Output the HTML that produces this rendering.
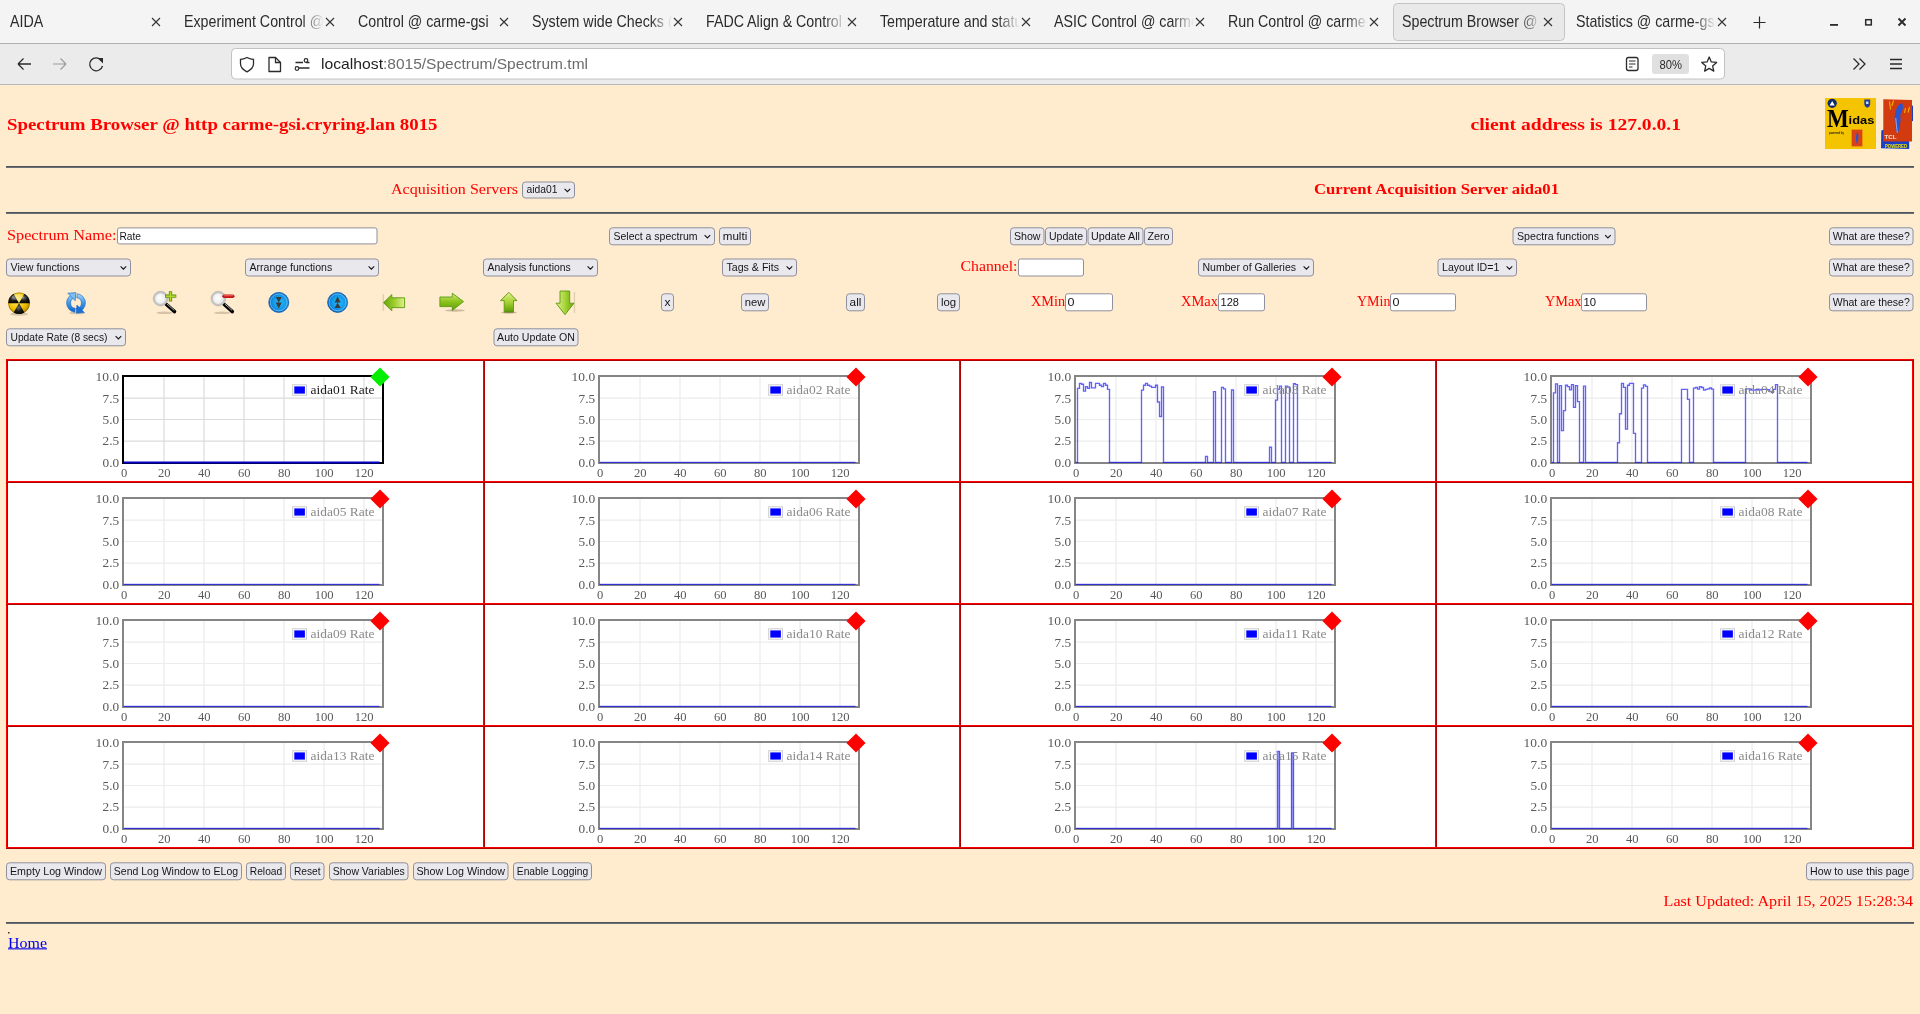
<!DOCTYPE html>
<html><head><meta charset="utf-8"><title>Spectrum Browser</title>
<style>
html,body{margin:0;padding:0;width:1920px;height:1014px;overflow:hidden;background:#ffebcd;font-family:"Liberation Sans",sans-serif;}
svg{position:absolute;left:0;top:0;display:block;will-change:transform}
</style></head>
<body>
<svg width="1920" height="1014" viewBox="0 0 1920 1014">
<rect x="0" y="0" width="1920" height="43" fill="#f4f4f4"/>
<rect x="0" y="43" width="1920" height="1" fill="#b0b0b0"/>
<rect x="0" y="44" width="1920" height="40" fill="#ebebeb"/>
<rect x="0" y="84" width="1920" height="1" fill="#b8b8b8"/>
<rect x="1393.5" y="3.5" width="171" height="37" rx="4" fill="#e9e9e9" stroke="#c4c4c4" stroke-width="1"/>
<defs><linearGradient id="fadeT" x1="0" x2="1"><stop offset="0" stop-color="#f4f4f4" stop-opacity="0"/><stop offset="1" stop-color="#f4f4f4"/></linearGradient><linearGradient id="fadeA" x1="0" x2="1"><stop offset="0" stop-color="#e9e9e9" stop-opacity="0"/><stop offset="1" stop-color="#e9e9e9"/></linearGradient></defs>
<defs><clipPath id="tc0"><rect x="8" y="0" width="142" height="43"/></clipPath><clipPath id="tc1"><rect x="182" y="0" width="142" height="43"/></clipPath><clipPath id="tc2"><rect x="356" y="0" width="142" height="43"/></clipPath><clipPath id="tc3"><rect x="530" y="0" width="142" height="43"/></clipPath><clipPath id="tc4"><rect x="704" y="0" width="142" height="43"/></clipPath><clipPath id="tc5"><rect x="878" y="0" width="142" height="43"/></clipPath><clipPath id="tc6"><rect x="1052" y="0" width="142" height="43"/></clipPath><clipPath id="tc7"><rect x="1226" y="0" width="142" height="43"/></clipPath><clipPath id="tc8"><rect x="1400" y="0" width="142" height="43"/></clipPath><clipPath id="tc9"><rect x="1574" y="0" width="142" height="43"/></clipPath></defs>
<g clip-path="url(#tc0)">
<text transform="translate(10,27) scale(0.89,1)" x="0" y="0" font-family='"Liberation Sans", sans-serif' font-size="16" fill="#2b2b2b">AIDA</text>
</g>
<path d="M152 18L160 26M160 18L152 26" stroke="#333" stroke-width="1.1" fill="none"/>
<g clip-path="url(#tc1)">
<text transform="translate(184,27) scale(0.89,1)" x="0" y="0" font-family='"Liberation Sans", sans-serif' font-size="16" fill="#2b2b2b">Experiment Control @ carme-gsi</text>
</g>
<rect x="302" y="8" width="22" height="28" fill="url(#fadeT)"/>
<path d="M326 18L334 26M334 18L326 26" stroke="#333" stroke-width="1.1" fill="none"/>
<g clip-path="url(#tc2)">
<text transform="translate(358,27) scale(0.89,1)" x="0" y="0" font-family='"Liberation Sans", sans-serif' font-size="16" fill="#2b2b2b">Control @ carme-gsi</text>
</g>
<path d="M500 18L508 26M508 18L500 26" stroke="#333" stroke-width="1.1" fill="none"/>
<g clip-path="url(#tc3)">
<text transform="translate(532,27) scale(0.89,1)" x="0" y="0" font-family='"Liberation Sans", sans-serif' font-size="16" fill="#2b2b2b">System wide Checks (carme)</text>
</g>
<rect x="650" y="8" width="22" height="28" fill="url(#fadeT)"/>
<path d="M674 18L682 26M682 18L674 26" stroke="#333" stroke-width="1.1" fill="none"/>
<g clip-path="url(#tc4)">
<text transform="translate(706,27) scale(0.89,1)" x="0" y="0" font-family='"Liberation Sans", sans-serif' font-size="16" fill="#2b2b2b">FADC Align &amp; Control @ carme</text>
</g>
<rect x="824" y="8" width="22" height="28" fill="url(#fadeT)"/>
<path d="M848 18L856 26M856 18L848 26" stroke="#333" stroke-width="1.1" fill="none"/>
<g clip-path="url(#tc5)">
<text transform="translate(880,27) scale(0.89,1)" x="0" y="0" font-family='"Liberation Sans", sans-serif' font-size="16" fill="#2b2b2b">Temperature and status @ carme</text>
</g>
<rect x="998" y="8" width="22" height="28" fill="url(#fadeT)"/>
<path d="M1022 18L1030 26M1030 18L1022 26" stroke="#333" stroke-width="1.1" fill="none"/>
<g clip-path="url(#tc6)">
<text transform="translate(1054,27) scale(0.89,1)" x="0" y="0" font-family='"Liberation Sans", sans-serif' font-size="16" fill="#2b2b2b">ASIC Control @ carme-gsi</text>
</g>
<rect x="1172" y="8" width="22" height="28" fill="url(#fadeT)"/>
<path d="M1196 18L1204 26M1204 18L1196 26" stroke="#333" stroke-width="1.1" fill="none"/>
<g clip-path="url(#tc7)">
<text transform="translate(1228,27) scale(0.89,1)" x="0" y="0" font-family='"Liberation Sans", sans-serif' font-size="16" fill="#2b2b2b">Run Control @ carme-gsi</text>
</g>
<rect x="1346" y="8" width="22" height="28" fill="url(#fadeT)"/>
<path d="M1370 18L1378 26M1378 18L1370 26" stroke="#333" stroke-width="1.1" fill="none"/>
<g clip-path="url(#tc8)">
<text transform="translate(1402,27) scale(0.89,1)" x="0" y="0" font-family='"Liberation Sans", sans-serif' font-size="16" fill="#2b2b2b">Spectrum Browser @ carme-gsi</text>
</g>
<rect x="1520" y="8" width="22" height="28" fill="url(#fadeA)"/>
<path d="M1544 18L1552 26M1552 18L1544 26" stroke="#333" stroke-width="1.1" fill="none"/>
<g clip-path="url(#tc9)">
<text transform="translate(1576,27) scale(0.89,1)" x="0" y="0" font-family='"Liberation Sans", sans-serif' font-size="16" fill="#2b2b2b">Statistics @ carme-gsi</text>
</g>
<rect x="1694" y="8" width="22" height="28" fill="url(#fadeT)"/>
<path d="M1718 18L1726 26M1726 18L1718 26" stroke="#333" stroke-width="1.1" fill="none"/>
<path d="M1753.5 22.5H1765.5M1759.5 16.5V28.5" stroke="#2b2b2b" stroke-width="1.2"/>
<rect x="1830" y="24" width="8" height="1.8" fill="#2b2b2b"/>
<rect x="1865.7" y="19.7" width="5.6" height="5.2" fill="none" stroke="#2b2b2b" stroke-width="1.5"/>
<path d="M1898.5 18.5L1905.5 25.5M1905.5 18.5L1898.5 25.5" stroke="#2b2b2b" stroke-width="1.9"/>
<path d="M18 64H31M18 64L23.5 58.5M18 64L23.5 69.5" stroke="#2b2b2b" stroke-width="1.3" fill="none"/>
<path d="M53 64H66M66 64L60.5 58.5M66 64L60.5 69.5" stroke="#9a9a9a" stroke-width="1.1" fill="none"/>
<path d="M101.5 60.5A6.5 6.5 0 1 0 102.5 66" stroke="#2b2b2b" stroke-width="1.3" fill="none"/><path d="M97.5 58L103 58L103 63.5Z" fill="#2b2b2b"/>
<rect x="231.5" y="48.5" width="1493" height="30.5" rx="4" fill="#ffffff" stroke="#c2c2c2" stroke-width="1"/>
<path d="M247 57.5C244.5 58.8 242.5 59.3 240.5 59.3V64C240.5 67.5 243.5 70 247 71.8C250.5 70 253.5 67.5 253.5 64V59.3C251.5 59.3 249.5 58.8 247 57.5Z" stroke="#2b2b2b" stroke-width="1.3" fill="none"/>
<path d="M269 57.5H275.5L280.5 62.5V71.5H269Z" stroke="#2b2b2b" stroke-width="1.3" fill="none" stroke-linejoin="round"/><path d="M275.5 57.5V62.5H280.5" stroke="#2b2b2b" stroke-width="1.3" fill="none"/>
<path d="M295.5 62.5H303M306 62.5H309.5M299 68H309.5" stroke="#2b2b2b" stroke-width="1.3"/><circle cx="306" cy="60.5" r="1.8" fill="none" stroke="#2b2b2b" stroke-width="1.2"/><circle cx="297" cy="68.5" r="1.8" fill="none" stroke="#2b2b2b" stroke-width="1.2"/>
<text x="321" y="68.6" font-family='"Liberation Sans", sans-serif' font-size="15" font-weight="400" fill="#1f1f1f" text-anchor="start" textLength="62" lengthAdjust="spacingAndGlyphs" >localhost</text>
<text x="383" y="68.6" font-family='"Liberation Sans", sans-serif' font-size="15" font-weight="400" fill="#6b6b6b" text-anchor="start" textLength="205" lengthAdjust="spacingAndGlyphs" >:8015/Spectrum/Spectrum.tml</text>
<rect x="1626.5" y="57.5" width="11.5" height="13" rx="2" fill="none" stroke="#2b2b2b" stroke-width="1.3"/><path d="M1629 61H1635.5M1629 64H1635.5M1629 67H1632.5" stroke="#2b2b2b" stroke-width="1.1"/>
<rect x="1652" y="54" width="37" height="20" rx="3" fill="#e0e0e0"/>
<text x="1659.5" y="69" font-family='"Liberation Sans", sans-serif' font-size="12.5" font-weight="400" fill="#2b2b2b" text-anchor="start" textLength="22.5" lengthAdjust="spacingAndGlyphs" >80%</text>
<polygon points="1709.20,57.00 1711.32,61.89 1716.62,62.39 1712.62,65.91 1713.78,71.11 1709.20,68.40 1704.62,71.11 1705.78,65.91 1701.78,62.39 1707.08,61.89" fill="none" stroke="#2b2b2b" stroke-width="1.3" stroke-linejoin="round"/>
<path d="M1853.5 58.5L1859 64L1853.5 69.5M1859.5 58.5L1865 64L1859.5 69.5" stroke="#2b2b2b" stroke-width="1.3" fill="none"/>
<path d="M1890 59.5H1902M1890 64H1902M1890 68.5H1902" stroke="#2b2b2b" stroke-width="1.3"/>
<rect x="0" y="85" width="1920" height="929" fill="#ffebcd"/>
<text x="7" y="130" font-family='"Liberation Serif", serif' font-size="16.5" font-weight="700" fill="#ff0000" text-anchor="start" textLength="430.5" lengthAdjust="spacingAndGlyphs" >Spectrum Browser @ http carme-gsi.cryring.lan 8015</text>
<text x="1470.5" y="130" font-family='"Liberation Serif", serif' font-size="16.5" font-weight="700" fill="#ff0000" text-anchor="start" textLength="210.5" lengthAdjust="spacingAndGlyphs" >client address is 127.0.0.1</text>
<rect x="6" y="166" width="1908" height="1" fill="#4f5257"/><rect x="6" y="167" width="1908" height="1" fill="#6c7075"/>
<rect x="6" y="212" width="1908" height="1" fill="#4f5257"/><rect x="6" y="213" width="1908" height="1" fill="#6c7075"/>
<rect x="6" y="922" width="1908" height="1" fill="#4f5257"/><rect x="6" y="923" width="1908" height="1" fill="#6c7075"/>
<text x="391" y="193.5" font-family='"Liberation Serif", serif' font-size="15" font-weight="400" fill="#ff0000" text-anchor="start" textLength="127" lengthAdjust="spacingAndGlyphs" >Acquisition Servers</text>
<text x="1314" y="193.5" font-family='"Liberation Serif", serif' font-size="14.8" font-weight="700" fill="#ff0000" text-anchor="start" textLength="245" lengthAdjust="spacingAndGlyphs" >Current Acquisition Server aida01</text>
<text x="7" y="240" font-family='"Liberation Serif", serif' font-size="14.8" font-weight="400" fill="#ff0000" text-anchor="start" textLength="109.5" lengthAdjust="spacingAndGlyphs" >Spectrum Name:</text>
<text x="960.5" y="271" font-family='"Liberation Serif", serif' font-size="14.8" font-weight="400" fill="#ff0000" text-anchor="start" textLength="57" lengthAdjust="spacingAndGlyphs" >Channel:</text>
<text x="1031" y="306" font-family='"Liberation Serif", serif' font-size="14.8" font-weight="400" fill="#ff0000" text-anchor="start" textLength="34" lengthAdjust="spacingAndGlyphs" >XMin</text>
<text x="1181" y="306" font-family='"Liberation Serif", serif' font-size="14.8" font-weight="400" fill="#ff0000" text-anchor="start" textLength="37" lengthAdjust="spacingAndGlyphs" >XMax</text>
<text x="1357" y="306" font-family='"Liberation Serif", serif' font-size="14.8" font-weight="400" fill="#ff0000" text-anchor="start" textLength="33.5" lengthAdjust="spacingAndGlyphs" >YMin</text>
<text x="1545" y="306" font-family='"Liberation Serif", serif' font-size="14.8" font-weight="400" fill="#ff0000" text-anchor="start" textLength="36.5" lengthAdjust="spacingAndGlyphs" >YMax</text>
<text x="1663.6" y="906.1" font-family='"Liberation Serif", serif' font-size="14.8" font-weight="400" fill="#ff0000" text-anchor="start" textLength="249.5" lengthAdjust="spacingAndGlyphs" >Last Updated: April 15, 2025 15:28:34</text>
<text x="8" y="948" font-family='"Liberation Serif", serif' font-size="14.8" font-weight="400" fill="#0000ee" text-anchor="start" textLength="39" lengthAdjust="spacingAndGlyphs" >Home</text>
<rect x="8" y="948.3" width="39" height="1.1" fill="#0000ee"/>
<rect x="8" y="932" width="1.5" height="1.5" fill="#333"/>
<rect x="522.5" y="182.0" width="52" height="16" rx="3" fill="#e9e9ed" stroke="#8f8f9d" stroke-width="1"/>
<text x="526.5" y="193.1" font-family='"Liberation Sans", sans-serif' font-size="11.8" font-weight="400" fill="#15141a" text-anchor="start" textLength="31" lengthAdjust="spacingAndGlyphs" >aida01</text>
<path d="M564.6 188.9L567.4 191.70000000000002L570.1999999999999 188.9" stroke="#15141a" stroke-width="1.1" fill="none"/>
<rect x="117.5" y="227.9" width="259.5" height="16" rx="2" fill="#ffffff" stroke="#8f8f9d" stroke-width="1"/>
<text x="119.5" y="240.4" font-family='"Liberation Sans", sans-serif' font-size="11.8" font-weight="400" fill="#15141a" text-anchor="start" textLength="21.5" lengthAdjust="spacingAndGlyphs" >Rate</text>
<rect x="609.5" y="227.8" width="105" height="17" rx="3" fill="#e9e9ed" stroke="#8f8f9d" stroke-width="1"/>
<text x="613.5" y="240.3" font-family='"Liberation Sans", sans-serif' font-size="11.8" font-weight="400" fill="#15141a" text-anchor="start" textLength="84" lengthAdjust="spacingAndGlyphs" >Select a spectrum</text>
<path d="M704.6 235.20000000000002L707.4 238.00000000000003L710.1999999999999 235.20000000000002" stroke="#15141a" stroke-width="1.1" fill="none"/>
<rect x="719.5" y="227.8" width="31" height="17" rx="3" fill="#e9e9ed" stroke="#8f8f9d" stroke-width="1"/>
<text x="735.0" y="240.3" font-family='"Liberation Sans", sans-serif' font-size="11.8" font-weight="400" fill="#15141a" text-anchor="middle" textLength="24.5" lengthAdjust="spacingAndGlyphs" >multi</text>
<rect x="1010.5" y="227.8" width="33.5" height="17" rx="3" fill="#e9e9ed" stroke="#8f8f9d" stroke-width="1"/>
<text x="1027.25" y="240.3" font-family='"Liberation Sans", sans-serif' font-size="11.8" font-weight="400" fill="#15141a" text-anchor="middle" textLength="26.6" lengthAdjust="spacingAndGlyphs" >Show</text>
<rect x="1045.5" y="227.8" width="41" height="17" rx="3" fill="#e9e9ed" stroke="#8f8f9d" stroke-width="1"/>
<text x="1066.0" y="240.3" font-family='"Liberation Sans", sans-serif' font-size="11.8" font-weight="400" fill="#15141a" text-anchor="middle" textLength="34" lengthAdjust="spacingAndGlyphs" >Update</text>
<rect x="1088.0" y="227.8" width="55.0" height="17" rx="3" fill="#e9e9ed" stroke="#8f8f9d" stroke-width="1"/>
<text x="1115.5" y="240.3" font-family='"Liberation Sans", sans-serif' font-size="11.8" font-weight="400" fill="#15141a" text-anchor="middle" textLength="49" lengthAdjust="spacingAndGlyphs" >Update All</text>
<rect x="1144.5" y="227.8" width="28" height="17" rx="3" fill="#e9e9ed" stroke="#8f8f9d" stroke-width="1"/>
<text x="1158.5" y="240.3" font-family='"Liberation Sans", sans-serif' font-size="11.8" font-weight="400" fill="#15141a" text-anchor="middle" textLength="22.2" lengthAdjust="spacingAndGlyphs" >Zero</text>
<rect x="1513.0" y="227.8" width="102.0" height="17" rx="3" fill="#e9e9ed" stroke="#8f8f9d" stroke-width="1"/>
<text x="1517.0" y="240.3" font-family='"Liberation Sans", sans-serif' font-size="11.8" font-weight="400" fill="#15141a" text-anchor="start" textLength="82" lengthAdjust="spacingAndGlyphs" >Spectra functions</text>
<path d="M1605.1000000000001 235.20000000000002L1607.9 238.00000000000003L1610.7 235.20000000000002" stroke="#15141a" stroke-width="1.1" fill="none"/>
<rect x="1829.5" y="227.8" width="83.5" height="17" rx="3" fill="#e9e9ed" stroke="#8f8f9d" stroke-width="1"/>
<text x="1871.25" y="240.3" font-family='"Liberation Sans", sans-serif' font-size="11.8" font-weight="400" fill="#15141a" text-anchor="middle" textLength="77" lengthAdjust="spacingAndGlyphs" >What are these?</text>
<rect x="6.5" y="259.0" width="124" height="17" rx="3" fill="#e9e9ed" stroke="#8f8f9d" stroke-width="1"/>
<text x="10.5" y="270.7" font-family='"Liberation Sans", sans-serif' font-size="11.8" font-weight="400" fill="#15141a" text-anchor="start" textLength="69" lengthAdjust="spacingAndGlyphs" >View functions</text>
<path d="M120.60000000000001 266.40000000000003L123.4 269.2L126.2 266.40000000000003" stroke="#15141a" stroke-width="1.1" fill="none"/>
<rect x="245.5" y="259.0" width="133" height="17" rx="3" fill="#e9e9ed" stroke="#8f8f9d" stroke-width="1"/>
<text x="249.5" y="270.7" font-family='"Liberation Sans", sans-serif' font-size="11.8" font-weight="400" fill="#15141a" text-anchor="start" textLength="82.7" lengthAdjust="spacingAndGlyphs" >Arrange functions</text>
<path d="M368.59999999999997 266.40000000000003L371.4 269.2L374.2 266.40000000000003" stroke="#15141a" stroke-width="1.1" fill="none"/>
<rect x="483.5" y="259.0" width="114" height="17" rx="3" fill="#e9e9ed" stroke="#8f8f9d" stroke-width="1"/>
<text x="487.5" y="270.7" font-family='"Liberation Sans", sans-serif' font-size="11.8" font-weight="400" fill="#15141a" text-anchor="start" textLength="83.2" lengthAdjust="spacingAndGlyphs" >Analysis functions</text>
<path d="M587.6 266.40000000000003L590.4 269.2L593.1999999999999 266.40000000000003" stroke="#15141a" stroke-width="1.1" fill="none"/>
<rect x="722.5" y="259.0" width="74" height="17" rx="3" fill="#e9e9ed" stroke="#8f8f9d" stroke-width="1"/>
<text x="726.5" y="270.7" font-family='"Liberation Sans", sans-serif' font-size="11.8" font-weight="400" fill="#15141a" text-anchor="start" textLength="52.5" lengthAdjust="spacingAndGlyphs" >Tags &amp; Fits</text>
<path d="M786.6 266.40000000000003L789.4 269.2L792.1999999999999 266.40000000000003" stroke="#15141a" stroke-width="1.1" fill="none"/>
<rect x="1018.5" y="259.0" width="65" height="17" rx="2" fill="#ffffff" stroke="#8f8f9d" stroke-width="1"/>
<rect x="1198.5" y="259.0" width="115" height="17" rx="3" fill="#e9e9ed" stroke="#8f8f9d" stroke-width="1"/>
<text x="1202.5" y="270.7" font-family='"Liberation Sans", sans-serif' font-size="11.8" font-weight="400" fill="#15141a" text-anchor="start" textLength="93.5" lengthAdjust="spacingAndGlyphs" >Number of Galleries</text>
<path d="M1303.6000000000001 266.40000000000003L1306.4 269.2L1309.2 266.40000000000003" stroke="#15141a" stroke-width="1.1" fill="none"/>
<rect x="1438.0" y="259.0" width="78.5" height="17" rx="3" fill="#e9e9ed" stroke="#8f8f9d" stroke-width="1"/>
<text x="1442.0" y="270.7" font-family='"Liberation Sans", sans-serif' font-size="11.8" font-weight="400" fill="#15141a" text-anchor="start" textLength="57.3" lengthAdjust="spacingAndGlyphs" >Layout ID=1</text>
<path d="M1506.6000000000001 266.40000000000003L1509.4 269.2L1512.2 266.40000000000003" stroke="#15141a" stroke-width="1.1" fill="none"/>
<rect x="1829.5" y="259.0" width="83.5" height="17" rx="3" fill="#e9e9ed" stroke="#8f8f9d" stroke-width="1"/>
<text x="1871.25" y="270.7" font-family='"Liberation Sans", sans-serif' font-size="11.8" font-weight="400" fill="#15141a" text-anchor="middle" textLength="77" lengthAdjust="spacingAndGlyphs" >What are these?</text>
<rect x="661.5" y="293.8" width="12" height="17" rx="3" fill="#e9e9ed" stroke="#8f8f9d" stroke-width="1"/>
<text x="667.5" y="306.3" font-family='"Liberation Sans", sans-serif' font-size="11.8" font-weight="400" fill="#15141a" text-anchor="middle" textLength="6" lengthAdjust="spacingAndGlyphs" >x</text>
<rect x="741.5" y="293.8" width="27" height="17" rx="3" fill="#e9e9ed" stroke="#8f8f9d" stroke-width="1"/>
<text x="755.0" y="306.3" font-family='"Liberation Sans", sans-serif' font-size="11.8" font-weight="400" fill="#15141a" text-anchor="middle" textLength="20.6" lengthAdjust="spacingAndGlyphs" >new</text>
<rect x="846.5" y="293.8" width="18" height="17" rx="3" fill="#e9e9ed" stroke="#8f8f9d" stroke-width="1"/>
<text x="855.5" y="306.3" font-family='"Liberation Sans", sans-serif' font-size="11.8" font-weight="400" fill="#15141a" text-anchor="middle" textLength="11.8" lengthAdjust="spacingAndGlyphs" >all</text>
<rect x="937.5" y="293.8" width="22" height="17" rx="3" fill="#e9e9ed" stroke="#8f8f9d" stroke-width="1"/>
<text x="948.5" y="306.3" font-family='"Liberation Sans", sans-serif' font-size="11.8" font-weight="400" fill="#15141a" text-anchor="middle" textLength="15.2" lengthAdjust="spacingAndGlyphs" >log</text>
<rect x="1065.5" y="293.8" width="47" height="17" rx="2" fill="#ffffff" stroke="#8f8f9d" stroke-width="1"/>
<text x="1067.5" y="306.3" font-family='"Liberation Sans", sans-serif' font-size="11.8" font-weight="400" fill="#15141a" text-anchor="start" textLength="7" lengthAdjust="spacingAndGlyphs" >0</text>
<rect x="1218.5" y="293.8" width="46" height="17" rx="2" fill="#ffffff" stroke="#8f8f9d" stroke-width="1"/>
<text x="1220.5" y="306.3" font-family='"Liberation Sans", sans-serif' font-size="11.8" font-weight="400" fill="#15141a" text-anchor="start" textLength="18.5" lengthAdjust="spacingAndGlyphs" >128</text>
<rect x="1390.5" y="293.8" width="65" height="17" rx="2" fill="#ffffff" stroke="#8f8f9d" stroke-width="1"/>
<text x="1392.5" y="306.3" font-family='"Liberation Sans", sans-serif' font-size="11.8" font-weight="400" fill="#15141a" text-anchor="start" textLength="7" lengthAdjust="spacingAndGlyphs" >0</text>
<rect x="1581.5" y="293.8" width="65" height="17" rx="2" fill="#ffffff" stroke="#8f8f9d" stroke-width="1"/>
<text x="1583.5" y="306.3" font-family='"Liberation Sans", sans-serif' font-size="11.8" font-weight="400" fill="#15141a" text-anchor="start" textLength="12.6" lengthAdjust="spacingAndGlyphs" >10</text>
<rect x="1829.5" y="293.8" width="83.5" height="17" rx="3" fill="#e9e9ed" stroke="#8f8f9d" stroke-width="1"/>
<text x="1871.25" y="306.3" font-family='"Liberation Sans", sans-serif' font-size="11.8" font-weight="400" fill="#15141a" text-anchor="middle" textLength="77" lengthAdjust="spacingAndGlyphs" >What are these?</text>
<rect x="6.5" y="328.8" width="119" height="17" rx="3" fill="#e9e9ed" stroke="#8f8f9d" stroke-width="1"/>
<text x="10.5" y="341.3" font-family='"Liberation Sans", sans-serif' font-size="11.8" font-weight="400" fill="#15141a" text-anchor="start" textLength="97" lengthAdjust="spacingAndGlyphs" >Update Rate (8 secs)</text>
<path d="M115.60000000000001 336.20000000000005L118.4 339.0L121.2 336.20000000000005" stroke="#15141a" stroke-width="1.1" fill="none"/>
<rect x="494.0" y="328.8" width="84.0" height="17" rx="3" fill="#e9e9ed" stroke="#8f8f9d" stroke-width="1"/>
<text x="536.0" y="341.3" font-family='"Liberation Sans", sans-serif' font-size="11.8" font-weight="400" fill="#15141a" text-anchor="middle" textLength="77.8" lengthAdjust="spacingAndGlyphs" >Auto Update ON</text>
<rect x="6.5" y="862.8" width="99" height="17" rx="3" fill="#e9e9ed" stroke="#8f8f9d" stroke-width="1"/>
<text x="56.0" y="875.3" font-family='"Liberation Sans", sans-serif' font-size="11.8" font-weight="400" fill="#15141a" text-anchor="middle" textLength="92" lengthAdjust="spacingAndGlyphs" >Empty Log Window</text>
<rect x="110.5" y="862.8" width="131" height="17" rx="3" fill="#e9e9ed" stroke="#8f8f9d" stroke-width="1"/>
<text x="176.0" y="875.3" font-family='"Liberation Sans", sans-serif' font-size="11.8" font-weight="400" fill="#15141a" text-anchor="middle" textLength="124.3" lengthAdjust="spacingAndGlyphs" >Send Log Window to ELog</text>
<rect x="246.5" y="862.8" width="39" height="17" rx="3" fill="#e9e9ed" stroke="#8f8f9d" stroke-width="1"/>
<text x="266.0" y="875.3" font-family='"Liberation Sans", sans-serif' font-size="11.8" font-weight="400" fill="#15141a" text-anchor="middle" textLength="32.5" lengthAdjust="spacingAndGlyphs" >Reload</text>
<rect x="290.5" y="862.8" width="33.5" height="17" rx="3" fill="#e9e9ed" stroke="#8f8f9d" stroke-width="1"/>
<text x="307.25" y="875.3" font-family='"Liberation Sans", sans-serif' font-size="11.8" font-weight="400" fill="#15141a" text-anchor="middle" textLength="26.7" lengthAdjust="spacingAndGlyphs" >Reset</text>
<rect x="329.5" y="862.8" width="78.5" height="17" rx="3" fill="#e9e9ed" stroke="#8f8f9d" stroke-width="1"/>
<text x="368.75" y="875.3" font-family='"Liberation Sans", sans-serif' font-size="11.8" font-weight="400" fill="#15141a" text-anchor="middle" textLength="72" lengthAdjust="spacingAndGlyphs" >Show Variables</text>
<rect x="413.5" y="862.8" width="94.5" height="17" rx="3" fill="#e9e9ed" stroke="#8f8f9d" stroke-width="1"/>
<text x="460.75" y="875.3" font-family='"Liberation Sans", sans-serif' font-size="11.8" font-weight="400" fill="#15141a" text-anchor="middle" textLength="88.6" lengthAdjust="spacingAndGlyphs" >Show Log Window</text>
<rect x="513.5" y="862.8" width="78" height="17" rx="3" fill="#e9e9ed" stroke="#8f8f9d" stroke-width="1"/>
<text x="552.5" y="875.3" font-family='"Liberation Sans", sans-serif' font-size="11.8" font-weight="400" fill="#15141a" text-anchor="middle" textLength="71.4" lengthAdjust="spacingAndGlyphs" >Enable Logging</text>
<rect x="1806.5" y="862.8" width="106.5" height="17" rx="3" fill="#e9e9ed" stroke="#8f8f9d" stroke-width="1"/>
<text x="1859.75" y="875.3" font-family='"Liberation Sans", sans-serif' font-size="11.8" font-weight="400" fill="#15141a" text-anchor="middle" textLength="99.3" lengthAdjust="spacingAndGlyphs" >How to use this page</text>
<defs>
<radialGradient id="radY" cx="0.4" cy="0.35" r="0.7"><stop offset="0" stop-color="#fff07a"/><stop offset="0.6" stop-color="#f2c200"/><stop offset="1" stop-color="#b88a00"/></radialGradient>
<radialGradient id="radK" cx="0.45" cy="0.4" r="0.7"><stop offset="0" stop-color="#6a6a6a"/><stop offset="0.5" stop-color="#1a1a1a"/><stop offset="1" stop-color="#000"/></radialGradient>
<radialGradient id="blueC" cx="0.55" cy="0.5" r="0.55"><stop offset="0" stop-color="#2ab8f8"/><stop offset="0.6" stop-color="#129ae8"/><stop offset="1" stop-color="#0a62c4"/></radialGradient>
<linearGradient id="grnH" x1="0" y1="0" x2="0" y2="1"><stop offset="0" stop-color="#d4ea7a"/><stop offset="0.5" stop-color="#8cc21a"/><stop offset="1" stop-color="#5f9e06"/></linearGradient>
<linearGradient id="grnV" x1="0" y1="0" x2="1" y2="0"><stop offset="0" stop-color="#e0f08e"/><stop offset="0.5" stop-color="#a8d43a"/><stop offset="1" stop-color="#66a808"/></linearGradient>
<linearGradient id="grnL" x1="0" y1="0" x2="1" y2="0"><stop offset="0" stop-color="#62a40a"/><stop offset="0.5" stop-color="#9ccc2a"/><stop offset="1" stop-color="#e2f08c"/></linearGradient>
<linearGradient id="grnU" x1="0" y1="0" x2="0" y2="1"><stop offset="0" stop-color="#e0f08e"/><stop offset="0.5" stop-color="#a6d232"/><stop offset="1" stop-color="#5c9c06"/></linearGradient>
<linearGradient id="refr" x1="0" y1="0" x2="0" y2="1"><stop offset="0" stop-color="#a9d8fa"/><stop offset="0.5" stop-color="#3c9ae8"/><stop offset="1" stop-color="#0f62c8"/></linearGradient>
<radialGradient id="lens" cx="0.45" cy="0.45" r="0.6"><stop offset="0" stop-color="#ffffff"/><stop offset="0.7" stop-color="#ececec"/><stop offset="1" stop-color="#bdbdbd"/></radialGradient>
</defs>
<ellipse cx="19" cy="314.2" rx="9" ry="1.6" fill="#8a7a60" opacity="0.35"/>
<circle cx="19" cy="303.2" r="10.8" fill="url(#radY)"/>
<path d="M19 303.2L29.80 303.20A10.8 10.8 0 0 0 24.40 293.85Z" fill="url(#radK)"/>
<path d="M19 303.2L13.60 293.85A10.8 10.8 0 0 0 8.20 303.20Z" fill="url(#radK)"/>
<path d="M19 303.2L13.60 312.55A10.8 10.8 0 0 0 24.40 312.55Z" fill="url(#radK)"/>
<circle cx="19" cy="303.2" r="10.4" fill="none" stroke="#000" stroke-opacity="0.35" stroke-width="0.8"/>
<ellipse cx="18" cy="297.2" rx="6" ry="3" fill="#fff" opacity="0.25"/>
<ellipse cx="77" cy="313" rx="8" ry="1.3" fill="#6a5a40" opacity="0.25"/>
<path d="M74.69 293.69A9.4 9.4 0 0 0 74.85 312.33L75.34 308.36A5.4 5.4 0 0 1 75.25 297.65Z" fill="url(#refr)" stroke="#1a64c4" stroke-width="0.6"/>
<path d="M67.8 293.2L75.8 292.6L75.2 300.8Z" fill="#7cc0f4" stroke="#1a64c4" stroke-width="0.6" stroke-linejoin="round"/>
<path d="M77.31 293.69A9.4 9.4 0 0 1 77.15 312.33L76.66 308.36A5.4 5.4 0 0 0 76.75 297.65Z" fill="url(#refr)" stroke="#1a64c4" stroke-width="0.6"/>
<path d="M84.4 312.6L76.4 313.2L76.9 305Z" fill="#1a6fd8" stroke="#1a64c4" stroke-width="0.6" stroke-linejoin="round"/>
<ellipse cx="164.6" cy="312.8" rx="8.5" ry="1.3" fill="#6a5a40" opacity="0.28"/>
<path d="M166.2 304.20000000000005L174.6 311.6" stroke="#000" stroke-width="3.4" stroke-linecap="round"/>
<path d="M167.0 304.0L174.4 310.5" stroke="#fff" stroke-width="0.9" opacity="0.75"/>
<circle cx="160.6" cy="298.6" r="6.4" fill="url(#lens)" stroke="#c4c4c4" stroke-width="1.9"/>
<circle cx="160.6" cy="298.6" r="7.4" fill="none" stroke="#a8a8a8" stroke-width="0.5"/>
<path d="M170.5 291.20000000000005V301.50000000000006M165.0 296.20000000000005H176.3" stroke="#5c9410" stroke-width="3.3"/>
<path d="M170.5 292.00000000000006V300.70000000000005M165.8 296.20000000000005H175.5" stroke="#b4d82c" stroke-width="1.5"/>
<ellipse cx="222.4" cy="312.8" rx="8.5" ry="1.3" fill="#6a5a40" opacity="0.28"/>
<path d="M224.0 304.20000000000005L232.4 311.6" stroke="#000" stroke-width="3.4" stroke-linecap="round"/>
<path d="M224.8 304.0L232.20000000000002 310.5" stroke="#fff" stroke-width="0.9" opacity="0.75"/>
<circle cx="218.4" cy="298.6" r="6.4" fill="url(#lens)" stroke="#c4c4c4" stroke-width="1.9"/>
<circle cx="218.4" cy="298.6" r="7.4" fill="none" stroke="#a8a8a8" stroke-width="0.5"/>
<path d="M224.0 296.20000000000005H232.8" stroke="#c01818" stroke-width="3.4" stroke-linecap="round"/>
<path d="M224.0 295.6H232.8" stroke="#ee5050" stroke-width="1.2" stroke-linecap="round"/>
<circle cx="278.75" cy="302.4" r="10" fill="url(#blueC)" stroke="#0b5aa8" stroke-width="0.8"/>
<circle cx="278.75" cy="302.4" r="8.4" fill="none" stroke="#9fdcff" stroke-width="0.7" opacity="0.8"/>
<path d="M275.75 296.9H281.75L278.75 302.4Z M275.75 302.4H281.75L278.75 308.4Z" fill="#3a3a3a"/>
<circle cx="337.6" cy="302.4" r="10" fill="url(#blueC)" stroke="#0b5aa8" stroke-width="0.8"/>
<circle cx="337.6" cy="302.4" r="8.4" fill="none" stroke="#9fdcff" stroke-width="0.7" opacity="0.8"/>
<path d="M334.6 307.9H340.6L337.6 302.4Z M334.6 302.4H340.6L337.6 296.4Z" fill="#3a3a3a"/>
<rect x="382.6" y="294" width="1.3" height="17" fill="#6a5a40" opacity="0.2"/><rect x="573.8" y="292" width="1.3" height="21" fill="#6a5a40" opacity="0.2"/>
<path d="M383.5 302.7L391.8 294.6V297.8H404.6V307.6H391.8V310.8Z" fill="url(#grnL)" stroke="#5a9a10" stroke-width="0.9" stroke-linejoin="round"/>
<path d="M463.5 301.6L452.3 293.2V297H439.9V306.6H452.3V310.4Z" fill="url(#grnH)" stroke="#5a9a10" stroke-width="0.9" stroke-linejoin="round"/>
<ellipse cx="455" cy="310.5" rx="10" ry="1.2" fill="#6a5a40" opacity="0.35"/>
<path d="M508.8 292.3L500.5 300.6H504.2V312.2H513.5V300.6H517Z" fill="url(#grnU)" stroke="#5a9a10" stroke-width="0.9" stroke-linejoin="round"/>
<ellipse cx="509" cy="312.5" rx="8" ry="1.2" fill="#6a5a40" opacity="0.35"/>
<path d="M565 314.7L556 303.2H560V291H569.7V303.2H574Z" fill="url(#grnV)" stroke="#5a9a10" stroke-width="0.9" stroke-linejoin="round"/>
<rect x="1825" y="98" width="51" height="51" fill="#f5c400"/>
<circle cx="1832.2" cy="103.3" r="4.6" fill="#0d2a6a"/><path d="M1829.6 105.5L1832.2 101L1834.8 105.5Z" fill="#fff"/>
<path d="M1864.3 99.5H1870.2V104C1870.2 106 1868.6 107.2 1867.25 107.8C1865.9 107.2 1864.3 106 1864.3 104Z" fill="#1f3f9a"/><path d="M1866 101.5H1868.5V104H1866Z" fill="#c9d6ff"/>
<text x="1827" y="126.8" font-family='"Liberation Serif", serif' font-size="25.5" font-weight="700" fill="#000" text-anchor="start" textLength="21.8" lengthAdjust="spacingAndGlyphs" >M</text>
<text x="1848.6" y="124.2" font-family='"Liberation Sans", sans-serif' font-size="11.2" font-weight="700" fill="#000" text-anchor="start" textLength="25.8" lengthAdjust="spacingAndGlyphs" >idas</text>
<text x="1829" y="134" font-family='"Liberation Sans", sans-serif' font-size="3.2" font-weight="700" fill="#222" text-anchor="start" textLength="15" lengthAdjust="spacingAndGlyphs" >powered by</text>
<rect x="1851.5" y="129.5" width="11" height="17" fill="#d8421a" stroke="#f0a000" stroke-width="0.6"/><path d="M1857.5 132C1855.5 135 1855.5 141 1857 144C1858.5 140 1859 135 1857.5 132Z" fill="#2a55c8"/>
<path d="M1881.3 130.5L1884 129.5V141H1909.2V149L1881 148.2Z" fill="#1a3fc4"/><path d="M1911 106L1913 105.5V121L1911 121.5Z" fill="#1a3fc4"/>
<path d="M1883.3 99.2L1912 100V141.5H1883.3Z" fill="#d23a10"/>
<path d="M1889.5 101.5L1890.5 109.5M1893.5 100.5L1891.8 106M1909.5 107L1908 112.5M1905.5 108L1904.5 112.8" stroke="#f0b000" stroke-width="1.1"/>
<path d="M1902 103C1896 105 1893.8 115 1895 123C1895.8 129 1897 134 1897.5 135.5C1898.8 130 1901.5 122 1900.3 114.5C1902.5 112 1904 106 1902 103Z" fill="#2a55d0"/><path d="M1895.8 118C1896 124 1897 129 1897.4 133" stroke="#dfe6ff" stroke-width="0.6" fill="none"/>
<text x="1884.5" y="138.8" font-family='"Liberation Sans", sans-serif' font-size="5.5" font-weight="700" fill="#f6e6d8" text-anchor="start" textLength="12" lengthAdjust="spacingAndGlyphs" >TCL</text>
<text x="1885" y="148" font-family='"Liberation Sans", sans-serif' font-size="5" font-weight="700" fill="#f0e000" text-anchor="start" textLength="22" lengthAdjust="spacingAndGlyphs" >POWERED</text>
<rect x="7" y="360" width="1906" height="488" fill="#ffffff"/>
<path d="M164 377V462M204 377V462M244 377V462M284 377V462M324 377V462M364 377V462M123.5 398.20H382M123.5 419.50H382M123.5 441.20H382" stroke="#dcdcdc" stroke-width="1.2" fill="none"/>
<text x="119.2" y="380.90" font-family='"Liberation Serif", serif' font-size="12.2" font-weight="400" fill="#5a5a5a" text-anchor="end" textLength="23.6" lengthAdjust="spacingAndGlyphs" >10.0</text>
<text x="119.2" y="402.60" font-family='"Liberation Serif", serif' font-size="12.2" font-weight="400" fill="#5a5a5a" text-anchor="end" textLength="16.6" lengthAdjust="spacingAndGlyphs" >7.5</text>
<text x="119.2" y="423.70" font-family='"Liberation Serif", serif' font-size="12.2" font-weight="400" fill="#5a5a5a" text-anchor="end" textLength="16.6" lengthAdjust="spacingAndGlyphs" >5.0</text>
<text x="119.2" y="444.70" font-family='"Liberation Serif", serif' font-size="12.2" font-weight="400" fill="#5a5a5a" text-anchor="end" textLength="16.6" lengthAdjust="spacingAndGlyphs" >2.5</text>
<text x="119.2" y="466.60" font-family='"Liberation Serif", serif' font-size="12.2" font-weight="400" fill="#5a5a5a" text-anchor="end" textLength="16.6" lengthAdjust="spacingAndGlyphs" >0.0</text>
<text x="124.2" y="476.7" font-family='"Liberation Serif", serif' font-size="12.2" font-weight="400" fill="#5a5a5a" text-anchor="middle" textLength="6.3" lengthAdjust="spacingAndGlyphs" >0</text>
<text x="164.2" y="476.7" font-family='"Liberation Serif", serif' font-size="12.2" font-weight="400" fill="#5a5a5a" text-anchor="middle" textLength="12.6" lengthAdjust="spacingAndGlyphs" >20</text>
<text x="204.2" y="476.7" font-family='"Liberation Serif", serif' font-size="12.2" font-weight="400" fill="#5a5a5a" text-anchor="middle" textLength="12.6" lengthAdjust="spacingAndGlyphs" >40</text>
<text x="244.2" y="476.7" font-family='"Liberation Serif", serif' font-size="12.2" font-weight="400" fill="#5a5a5a" text-anchor="middle" textLength="12.6" lengthAdjust="spacingAndGlyphs" >60</text>
<text x="284.2" y="476.7" font-family='"Liberation Serif", serif' font-size="12.2" font-weight="400" fill="#5a5a5a" text-anchor="middle" textLength="12.6" lengthAdjust="spacingAndGlyphs" >80</text>
<text x="324.2" y="476.7" font-family='"Liberation Serif", serif' font-size="12.2" font-weight="400" fill="#5a5a5a" text-anchor="middle" textLength="19" lengthAdjust="spacingAndGlyphs" >100</text>
<text x="364.2" y="476.7" font-family='"Liberation Serif", serif' font-size="12.2" font-weight="400" fill="#5a5a5a" text-anchor="middle" textLength="19" lengthAdjust="spacingAndGlyphs" >120</text>
<rect x="123" y="376" width="260" height="87" fill="none" stroke="#000000" stroke-width="2"/>
<path d="M123.5 462.4V462.40H125.5V462.40H127.5V462.40H129.5V462.40H131.5V462.40H133.5V462.40H135.5V462.40H137.5V462.40H139.5V462.40H141.5V462.40H143.5V462.40H145.5V462.40H147.5V462.40H149.5V462.40H151.5V462.40H153.5V462.40H155.5V462.40H157.5V462.40H159.5V462.40H161.5V462.40H163.5V462.40H165.5V462.40H167.5V462.40H169.5V462.40H171.5V462.40H173.5V462.40H175.5V462.40H177.5V462.40H179.5V462.40H181.5V462.40H183.5V462.40H185.5V462.40H187.5V462.40H189.5V462.40H191.5V462.40H193.5V462.40H195.5V462.40H197.5V462.40H199.5V462.40H201.5V462.40H203.5V462.40H205.5V462.40H207.5V462.40H209.5V462.40H211.5V462.40H213.5V462.40H215.5V462.40H217.5V462.40H219.5V462.40H221.5V462.40H223.5V462.40H225.5V462.40H227.5V462.40H229.5V462.40H231.5V462.40H233.5V462.40H235.5V462.40H237.5V462.40H239.5V462.40H241.5V462.40H243.5V462.40H245.5V462.40H247.5V462.40H249.5V462.40H251.5V462.40H253.5V462.40H255.5V462.40H257.5V462.40H259.5V462.40H261.5V462.40H263.5V462.40H265.5V462.40H267.5V462.40H269.5V462.40H271.5V462.40H273.5V462.40H275.5V462.40H277.5V462.40H279.5V462.40H281.5V462.40H283.5V462.40H285.5V462.40H287.5V462.40H289.5V462.40H291.5V462.40H293.5V462.40H295.5V462.40H297.5V462.40H299.5V462.40H301.5V462.40H303.5V462.40H305.5V462.40H307.5V462.40H309.5V462.40H311.5V462.40H313.5V462.40H315.5V462.40H317.5V462.40H319.5V462.40H321.5V462.40H323.5V462.40H325.5V462.40H327.5V462.40H329.5V462.40H331.5V462.40H333.5V462.40H335.5V462.40H337.5V462.40H339.5V462.40H341.5V462.40H343.5V462.40H345.5V462.40H347.5V462.40H349.5V462.40H351.5V462.40H353.5V462.40H355.5V462.40H357.5V462.40H359.5V462.40H361.5V462.40H363.5V462.40H365.5V462.40H367.5V462.40H369.5V462.40H371.5V462.40H373.5V462.40H375.5V462.40H377.5V462.40H379.5V462.4" stroke="#0000c8" stroke-width="2" fill="none"/>
<rect x="292.7" y="384.8" width="13.8" height="10.4" fill="#fff" stroke="#cccccc" stroke-width="1"/>
<rect x="294.3" y="386.4" width="10.6" height="7.2" fill="#0000ff"/>
<text x="310.5" y="394.2" font-family='"Liberation Serif", serif' font-size="13" font-weight="400" fill="#1a1a1a" text-anchor="start" textLength="64" lengthAdjust="spacingAndGlyphs" >aida01 Rate</text>
<path d="M380 367.4L389.6 377L380 386.6L370.4 377Z" fill="#00ee00"/>
<path d="M640 377V462M680 377V462M720 377V462M760 377V462M800 377V462M840 377V462M599.5 398.20H858M599.5 419.50H858M599.5 441.20H858" stroke="#ececec" stroke-width="1.2" fill="none"/>
<text x="595.2" y="380.90" font-family='"Liberation Serif", serif' font-size="12.2" font-weight="400" fill="#5a5a5a" text-anchor="end" textLength="23.6" lengthAdjust="spacingAndGlyphs" >10.0</text>
<text x="595.2" y="402.60" font-family='"Liberation Serif", serif' font-size="12.2" font-weight="400" fill="#5a5a5a" text-anchor="end" textLength="16.6" lengthAdjust="spacingAndGlyphs" >7.5</text>
<text x="595.2" y="423.70" font-family='"Liberation Serif", serif' font-size="12.2" font-weight="400" fill="#5a5a5a" text-anchor="end" textLength="16.6" lengthAdjust="spacingAndGlyphs" >5.0</text>
<text x="595.2" y="444.70" font-family='"Liberation Serif", serif' font-size="12.2" font-weight="400" fill="#5a5a5a" text-anchor="end" textLength="16.6" lengthAdjust="spacingAndGlyphs" >2.5</text>
<text x="595.2" y="466.60" font-family='"Liberation Serif", serif' font-size="12.2" font-weight="400" fill="#5a5a5a" text-anchor="end" textLength="16.6" lengthAdjust="spacingAndGlyphs" >0.0</text>
<text x="600.2" y="476.7" font-family='"Liberation Serif", serif' font-size="12.2" font-weight="400" fill="#5a5a5a" text-anchor="middle" textLength="6.3" lengthAdjust="spacingAndGlyphs" >0</text>
<text x="640.2" y="476.7" font-family='"Liberation Serif", serif' font-size="12.2" font-weight="400" fill="#5a5a5a" text-anchor="middle" textLength="12.6" lengthAdjust="spacingAndGlyphs" >20</text>
<text x="680.2" y="476.7" font-family='"Liberation Serif", serif' font-size="12.2" font-weight="400" fill="#5a5a5a" text-anchor="middle" textLength="12.6" lengthAdjust="spacingAndGlyphs" >40</text>
<text x="720.2" y="476.7" font-family='"Liberation Serif", serif' font-size="12.2" font-weight="400" fill="#5a5a5a" text-anchor="middle" textLength="12.6" lengthAdjust="spacingAndGlyphs" >60</text>
<text x="760.2" y="476.7" font-family='"Liberation Serif", serif' font-size="12.2" font-weight="400" fill="#5a5a5a" text-anchor="middle" textLength="12.6" lengthAdjust="spacingAndGlyphs" >80</text>
<text x="800.2" y="476.7" font-family='"Liberation Serif", serif' font-size="12.2" font-weight="400" fill="#5a5a5a" text-anchor="middle" textLength="19" lengthAdjust="spacingAndGlyphs" >100</text>
<text x="840.2" y="476.7" font-family='"Liberation Serif", serif' font-size="12.2" font-weight="400" fill="#5a5a5a" text-anchor="middle" textLength="19" lengthAdjust="spacingAndGlyphs" >120</text>
<rect x="599" y="376" width="260" height="87" fill="none" stroke="#858585" stroke-width="2"/>
<path d="M599.5 462.4V462.40H601.5V462.40H603.5V462.40H605.5V462.40H607.5V462.40H609.5V462.40H611.5V462.40H613.5V462.40H615.5V462.40H617.5V462.40H619.5V462.40H621.5V462.40H623.5V462.40H625.5V462.40H627.5V462.40H629.5V462.40H631.5V462.40H633.5V462.40H635.5V462.40H637.5V462.40H639.5V462.40H641.5V462.40H643.5V462.40H645.5V462.40H647.5V462.40H649.5V462.40H651.5V462.40H653.5V462.40H655.5V462.40H657.5V462.40H659.5V462.40H661.5V462.40H663.5V462.40H665.5V462.40H667.5V462.40H669.5V462.40H671.5V462.40H673.5V462.40H675.5V462.40H677.5V462.40H679.5V462.40H681.5V462.40H683.5V462.40H685.5V462.40H687.5V462.40H689.5V462.40H691.5V462.40H693.5V462.40H695.5V462.40H697.5V462.40H699.5V462.40H701.5V462.40H703.5V462.40H705.5V462.40H707.5V462.40H709.5V462.40H711.5V462.40H713.5V462.40H715.5V462.40H717.5V462.40H719.5V462.40H721.5V462.40H723.5V462.40H725.5V462.40H727.5V462.40H729.5V462.40H731.5V462.40H733.5V462.40H735.5V462.40H737.5V462.40H739.5V462.40H741.5V462.40H743.5V462.40H745.5V462.40H747.5V462.40H749.5V462.40H751.5V462.40H753.5V462.40H755.5V462.40H757.5V462.40H759.5V462.40H761.5V462.40H763.5V462.40H765.5V462.40H767.5V462.40H769.5V462.40H771.5V462.40H773.5V462.40H775.5V462.40H777.5V462.40H779.5V462.40H781.5V462.40H783.5V462.40H785.5V462.40H787.5V462.40H789.5V462.40H791.5V462.40H793.5V462.40H795.5V462.40H797.5V462.40H799.5V462.40H801.5V462.40H803.5V462.40H805.5V462.40H807.5V462.40H809.5V462.40H811.5V462.40H813.5V462.40H815.5V462.40H817.5V462.40H819.5V462.40H821.5V462.40H823.5V462.40H825.5V462.40H827.5V462.40H829.5V462.40H831.5V462.40H833.5V462.40H835.5V462.40H837.5V462.40H839.5V462.40H841.5V462.40H843.5V462.40H845.5V462.40H847.5V462.40H849.5V462.40H851.5V462.40H853.5V462.40H855.5V462.4" stroke="#0000ff" stroke-opacity="0.62" stroke-width="1.35" fill="none"/>
<rect x="768.7" y="384.8" width="13.8" height="10.4" fill="#fff" stroke="#cccccc" stroke-width="1"/>
<rect x="770.3" y="386.4" width="10.6" height="7.2" fill="#0000ff"/>
<text x="786.5" y="394.2" font-family='"Liberation Serif", serif' font-size="13" font-weight="400" fill="#8a8a8a" text-anchor="start" textLength="64" lengthAdjust="spacingAndGlyphs" >aida02 Rate</text>
<path d="M856 367.4L865.6 377L856 386.6L846.4 377Z" fill="#ff0000"/>
<path d="M1116 377V462M1156 377V462M1196 377V462M1236 377V462M1276 377V462M1316 377V462M1075.5 398.20H1334M1075.5 419.50H1334M1075.5 441.20H1334" stroke="#ececec" stroke-width="1.2" fill="none"/>
<text x="1071.2" y="380.90" font-family='"Liberation Serif", serif' font-size="12.2" font-weight="400" fill="#5a5a5a" text-anchor="end" textLength="23.6" lengthAdjust="spacingAndGlyphs" >10.0</text>
<text x="1071.2" y="402.60" font-family='"Liberation Serif", serif' font-size="12.2" font-weight="400" fill="#5a5a5a" text-anchor="end" textLength="16.6" lengthAdjust="spacingAndGlyphs" >7.5</text>
<text x="1071.2" y="423.70" font-family='"Liberation Serif", serif' font-size="12.2" font-weight="400" fill="#5a5a5a" text-anchor="end" textLength="16.6" lengthAdjust="spacingAndGlyphs" >5.0</text>
<text x="1071.2" y="444.70" font-family='"Liberation Serif", serif' font-size="12.2" font-weight="400" fill="#5a5a5a" text-anchor="end" textLength="16.6" lengthAdjust="spacingAndGlyphs" >2.5</text>
<text x="1071.2" y="466.60" font-family='"Liberation Serif", serif' font-size="12.2" font-weight="400" fill="#5a5a5a" text-anchor="end" textLength="16.6" lengthAdjust="spacingAndGlyphs" >0.0</text>
<text x="1076.2" y="476.7" font-family='"Liberation Serif", serif' font-size="12.2" font-weight="400" fill="#5a5a5a" text-anchor="middle" textLength="6.3" lengthAdjust="spacingAndGlyphs" >0</text>
<text x="1116.2" y="476.7" font-family='"Liberation Serif", serif' font-size="12.2" font-weight="400" fill="#5a5a5a" text-anchor="middle" textLength="12.6" lengthAdjust="spacingAndGlyphs" >20</text>
<text x="1156.2" y="476.7" font-family='"Liberation Serif", serif' font-size="12.2" font-weight="400" fill="#5a5a5a" text-anchor="middle" textLength="12.6" lengthAdjust="spacingAndGlyphs" >40</text>
<text x="1196.2" y="476.7" font-family='"Liberation Serif", serif' font-size="12.2" font-weight="400" fill="#5a5a5a" text-anchor="middle" textLength="12.6" lengthAdjust="spacingAndGlyphs" >60</text>
<text x="1236.2" y="476.7" font-family='"Liberation Serif", serif' font-size="12.2" font-weight="400" fill="#5a5a5a" text-anchor="middle" textLength="12.6" lengthAdjust="spacingAndGlyphs" >80</text>
<text x="1276.2" y="476.7" font-family='"Liberation Serif", serif' font-size="12.2" font-weight="400" fill="#5a5a5a" text-anchor="middle" textLength="19" lengthAdjust="spacingAndGlyphs" >100</text>
<text x="1316.2" y="476.7" font-family='"Liberation Serif", serif' font-size="12.2" font-weight="400" fill="#5a5a5a" text-anchor="middle" textLength="19" lengthAdjust="spacingAndGlyphs" >120</text>
<rect x="1075" y="376" width="260" height="87" fill="none" stroke="#858585" stroke-width="2"/>
<path d="M1075.5 462.4V462.40H1077.5V388.44H1079.5V383.43H1081.5V384.29H1083.5V391.12H1085.5V386.63H1087.5V388.44H1089.5V382.47H1091.5V387.92H1093.5V387.92H1095.5V383.43H1097.5V383.43H1099.5V385.24H1101.5V386.63H1103.5V383.43H1105.5V385.24H1107.5V389.31H1109.5V462.40H1111.5V462.40H1113.5V462.40H1115.5V462.40H1117.5V462.40H1119.5V462.40H1121.5V462.40H1123.5V462.40H1125.5V462.40H1127.5V462.40H1129.5V462.40H1131.5V462.40H1133.5V462.40H1135.5V462.40H1137.5V462.40H1139.5V462.40H1141.5V390.17H1143.5V385.24H1145.5V383.43H1147.5V385.24H1149.5V386.11H1151.5V387.32H1153.5V387.32H1155.5V385.24H1157.5V402.02H1159.5V416.47H1161.5V386.97H1163.5V462.40H1165.5V462.40H1167.5V462.40H1169.5V462.40H1171.5V462.40H1173.5V462.40H1175.5V462.40H1177.5V462.40H1179.5V462.40H1181.5V462.40H1183.5V462.40H1185.5V462.40H1187.5V462.40H1189.5V462.40H1191.5V462.40H1193.5V462.40H1195.5V462.40H1197.5V462.40H1199.5V462.40H1201.5V462.40H1203.5V462.40H1205.5V456.43H1207.5V462.40H1209.5V462.40H1211.5V462.40H1213.5V391.64H1215.5V462.40H1217.5V462.40H1219.5V462.40H1221.5V387.32H1223.5V388.88H1225.5V462.40H1227.5V462.40H1229.5V462.40H1231.5V390.00H1233.5V462.40H1235.5V462.40H1237.5V462.40H1239.5V462.40H1241.5V462.40H1243.5V462.40H1245.5V462.40H1247.5V462.40H1249.5V462.40H1251.5V462.40H1253.5V462.40H1255.5V462.40H1257.5V462.40H1259.5V462.40H1261.5V462.40H1263.5V462.40H1265.5V462.40H1267.5V462.40H1269.5V447.26H1271.5V462.40H1273.5V462.40H1275.5V400.12H1277.5V389.31H1279.5V386.11H1281.5V462.40H1283.5V462.40H1285.5V386.11H1287.5V387.14H1289.5V462.40H1291.5V462.40H1293.5V383.77H1295.5V384.55H1297.5V462.40H1299.5V462.40H1301.5V462.40H1303.5V462.40H1305.5V462.40H1307.5V462.40H1309.5V462.40H1311.5V462.40H1313.5V462.40H1315.5V462.40H1317.5V462.40H1319.5V462.40H1321.5V462.40H1323.5V462.40H1325.5V462.40H1327.5V462.40H1329.5V462.40H1331.5V462.4" stroke="#0000ff" stroke-opacity="0.62" stroke-width="1.35" fill="none"/>
<rect x="1244.7" y="384.8" width="13.8" height="10.4" fill="#fff" stroke="#cccccc" stroke-width="1"/>
<rect x="1246.3" y="386.4" width="10.6" height="7.2" fill="#0000ff"/>
<text x="1262.5" y="394.2" font-family='"Liberation Serif", serif' font-size="13" font-weight="400" fill="#8a8a8a" text-anchor="start" textLength="64" lengthAdjust="spacingAndGlyphs" >aida03 Rate</text>
<path d="M1332 367.4L1341.6 377L1332 386.6L1322.4 377Z" fill="#ff0000"/>
<path d="M1592 377V462M1632 377V462M1672 377V462M1712 377V462M1752 377V462M1792 377V462M1551.5 398.20H1810M1551.5 419.50H1810M1551.5 441.20H1810" stroke="#ececec" stroke-width="1.2" fill="none"/>
<text x="1547.2" y="380.90" font-family='"Liberation Serif", serif' font-size="12.2" font-weight="400" fill="#5a5a5a" text-anchor="end" textLength="23.6" lengthAdjust="spacingAndGlyphs" >10.0</text>
<text x="1547.2" y="402.60" font-family='"Liberation Serif", serif' font-size="12.2" font-weight="400" fill="#5a5a5a" text-anchor="end" textLength="16.6" lengthAdjust="spacingAndGlyphs" >7.5</text>
<text x="1547.2" y="423.70" font-family='"Liberation Serif", serif' font-size="12.2" font-weight="400" fill="#5a5a5a" text-anchor="end" textLength="16.6" lengthAdjust="spacingAndGlyphs" >5.0</text>
<text x="1547.2" y="444.70" font-family='"Liberation Serif", serif' font-size="12.2" font-weight="400" fill="#5a5a5a" text-anchor="end" textLength="16.6" lengthAdjust="spacingAndGlyphs" >2.5</text>
<text x="1547.2" y="466.60" font-family='"Liberation Serif", serif' font-size="12.2" font-weight="400" fill="#5a5a5a" text-anchor="end" textLength="16.6" lengthAdjust="spacingAndGlyphs" >0.0</text>
<text x="1552.2" y="476.7" font-family='"Liberation Serif", serif' font-size="12.2" font-weight="400" fill="#5a5a5a" text-anchor="middle" textLength="6.3" lengthAdjust="spacingAndGlyphs" >0</text>
<text x="1592.2" y="476.7" font-family='"Liberation Serif", serif' font-size="12.2" font-weight="400" fill="#5a5a5a" text-anchor="middle" textLength="12.6" lengthAdjust="spacingAndGlyphs" >20</text>
<text x="1632.2" y="476.7" font-family='"Liberation Serif", serif' font-size="12.2" font-weight="400" fill="#5a5a5a" text-anchor="middle" textLength="12.6" lengthAdjust="spacingAndGlyphs" >40</text>
<text x="1672.2" y="476.7" font-family='"Liberation Serif", serif' font-size="12.2" font-weight="400" fill="#5a5a5a" text-anchor="middle" textLength="12.6" lengthAdjust="spacingAndGlyphs" >60</text>
<text x="1712.2" y="476.7" font-family='"Liberation Serif", serif' font-size="12.2" font-weight="400" fill="#5a5a5a" text-anchor="middle" textLength="12.6" lengthAdjust="spacingAndGlyphs" >80</text>
<text x="1752.2" y="476.7" font-family='"Liberation Serif", serif' font-size="12.2" font-weight="400" fill="#5a5a5a" text-anchor="middle" textLength="19" lengthAdjust="spacingAndGlyphs" >100</text>
<text x="1792.2" y="476.7" font-family='"Liberation Serif", serif' font-size="12.2" font-weight="400" fill="#5a5a5a" text-anchor="middle" textLength="19" lengthAdjust="spacingAndGlyphs" >120</text>
<rect x="1551" y="376" width="260" height="87" fill="none" stroke="#858585" stroke-width="2"/>
<path d="M1551.5 462.4V462.40H1553.5V392.94H1555.5V383.86H1557.5V462.40H1559.5V385.67H1561.5V430.57H1563.5V410.59H1565.5V385.24H1567.5V386.63H1569.5V389.83H1571.5V384.55H1573.5V407.30H1575.5V385.67H1577.5V401.59H1579.5V462.40H1581.5V462.40H1583.5V386.11H1585.5V462.40H1587.5V462.40H1589.5V462.40H1591.5V462.40H1593.5V462.40H1595.5V462.40H1597.5V462.40H1599.5V462.40H1601.5V462.40H1603.5V462.40H1605.5V462.40H1607.5V462.40H1609.5V462.40H1611.5V462.40H1613.5V462.40H1615.5V462.40H1617.5V442.76H1619.5V413.79H1621.5V383.43H1623.5V387.32H1625.5V429.18H1627.5V385.24H1629.5V383.43H1631.5V383.43H1633.5V433.34H1635.5V462.40H1637.5V462.40H1639.5V462.40H1641.5V388.18H1643.5V384.81H1645.5V386.37H1647.5V462.40H1649.5V462.40H1651.5V462.40H1653.5V462.40H1655.5V462.40H1657.5V462.40H1659.5V462.40H1661.5V462.40H1663.5V462.40H1665.5V462.40H1667.5V462.40H1669.5V462.40H1671.5V462.40H1673.5V462.40H1675.5V462.40H1677.5V462.40H1679.5V462.40H1681.5V389.31H1683.5V389.31H1685.5V389.31H1687.5V399.34H1689.5V462.40H1691.5V462.40H1693.5V388.18H1695.5V387.49H1697.5V389.13H1699.5V386.63H1701.5V387.49H1703.5V390.17H1705.5V389.31H1707.5V388.88H1709.5V388.01H1711.5V389.13H1713.5V462.40H1715.5V462.40H1717.5V462.40H1719.5V462.40H1721.5V462.40H1723.5V462.40H1725.5V462.40H1727.5V462.40H1729.5V462.40H1731.5V462.40H1733.5V462.40H1735.5V462.40H1737.5V462.40H1739.5V462.40H1741.5V462.40H1743.5V462.40H1745.5V388.88H1747.5V388.88H1749.5V389.74H1751.5V390.17H1753.5V390.17H1755.5V389.74H1757.5V389.74H1759.5V389.74H1761.5V389.31H1763.5V389.31H1765.5V389.31H1767.5V389.74H1769.5V391.47H1771.5V392.33H1773.5V389.31H1775.5V384.55H1777.5V462.40H1779.5V462.40H1781.5V462.40H1783.5V462.40H1785.5V462.40H1787.5V462.40H1789.5V462.40H1791.5V462.40H1793.5V462.40H1795.5V462.40H1797.5V462.40H1799.5V462.40H1801.5V462.40H1803.5V462.40H1805.5V462.40H1807.5V462.4" stroke="#0000ff" stroke-opacity="0.62" stroke-width="1.35" fill="none"/>
<rect x="1720.7" y="384.8" width="13.8" height="10.4" fill="#fff" stroke="#cccccc" stroke-width="1"/>
<rect x="1722.3" y="386.4" width="10.6" height="7.2" fill="#0000ff"/>
<text x="1738.5" y="394.2" font-family='"Liberation Serif", serif' font-size="13" font-weight="400" fill="#8a8a8a" text-anchor="start" textLength="64" lengthAdjust="spacingAndGlyphs" >aida04 Rate</text>
<path d="M1808 367.4L1817.6 377L1808 386.6L1798.4 377Z" fill="#ff0000"/>
<path d="M164 499V584M204 499V584M244 499V584M284 499V584M324 499V584M364 499V584M123.5 520.20H382M123.5 541.50H382M123.5 563.20H382" stroke="#ececec" stroke-width="1.2" fill="none"/>
<text x="119.2" y="502.90" font-family='"Liberation Serif", serif' font-size="12.2" font-weight="400" fill="#5a5a5a" text-anchor="end" textLength="23.6" lengthAdjust="spacingAndGlyphs" >10.0</text>
<text x="119.2" y="524.60" font-family='"Liberation Serif", serif' font-size="12.2" font-weight="400" fill="#5a5a5a" text-anchor="end" textLength="16.6" lengthAdjust="spacingAndGlyphs" >7.5</text>
<text x="119.2" y="545.70" font-family='"Liberation Serif", serif' font-size="12.2" font-weight="400" fill="#5a5a5a" text-anchor="end" textLength="16.6" lengthAdjust="spacingAndGlyphs" >5.0</text>
<text x="119.2" y="566.70" font-family='"Liberation Serif", serif' font-size="12.2" font-weight="400" fill="#5a5a5a" text-anchor="end" textLength="16.6" lengthAdjust="spacingAndGlyphs" >2.5</text>
<text x="119.2" y="588.60" font-family='"Liberation Serif", serif' font-size="12.2" font-weight="400" fill="#5a5a5a" text-anchor="end" textLength="16.6" lengthAdjust="spacingAndGlyphs" >0.0</text>
<text x="124.2" y="598.7" font-family='"Liberation Serif", serif' font-size="12.2" font-weight="400" fill="#5a5a5a" text-anchor="middle" textLength="6.3" lengthAdjust="spacingAndGlyphs" >0</text>
<text x="164.2" y="598.7" font-family='"Liberation Serif", serif' font-size="12.2" font-weight="400" fill="#5a5a5a" text-anchor="middle" textLength="12.6" lengthAdjust="spacingAndGlyphs" >20</text>
<text x="204.2" y="598.7" font-family='"Liberation Serif", serif' font-size="12.2" font-weight="400" fill="#5a5a5a" text-anchor="middle" textLength="12.6" lengthAdjust="spacingAndGlyphs" >40</text>
<text x="244.2" y="598.7" font-family='"Liberation Serif", serif' font-size="12.2" font-weight="400" fill="#5a5a5a" text-anchor="middle" textLength="12.6" lengthAdjust="spacingAndGlyphs" >60</text>
<text x="284.2" y="598.7" font-family='"Liberation Serif", serif' font-size="12.2" font-weight="400" fill="#5a5a5a" text-anchor="middle" textLength="12.6" lengthAdjust="spacingAndGlyphs" >80</text>
<text x="324.2" y="598.7" font-family='"Liberation Serif", serif' font-size="12.2" font-weight="400" fill="#5a5a5a" text-anchor="middle" textLength="19" lengthAdjust="spacingAndGlyphs" >100</text>
<text x="364.2" y="598.7" font-family='"Liberation Serif", serif' font-size="12.2" font-weight="400" fill="#5a5a5a" text-anchor="middle" textLength="19" lengthAdjust="spacingAndGlyphs" >120</text>
<rect x="123" y="498" width="260" height="87" fill="none" stroke="#858585" stroke-width="2"/>
<path d="M123.5 584.4V584.40H125.5V584.40H127.5V584.40H129.5V584.40H131.5V584.40H133.5V584.40H135.5V584.40H137.5V584.40H139.5V584.40H141.5V584.40H143.5V584.40H145.5V584.40H147.5V584.40H149.5V584.40H151.5V584.40H153.5V584.40H155.5V584.40H157.5V584.40H159.5V584.40H161.5V584.40H163.5V584.40H165.5V584.40H167.5V584.40H169.5V584.40H171.5V584.40H173.5V584.40H175.5V584.40H177.5V584.40H179.5V584.40H181.5V584.40H183.5V584.40H185.5V584.40H187.5V584.40H189.5V584.40H191.5V584.40H193.5V584.40H195.5V584.40H197.5V584.40H199.5V584.40H201.5V584.40H203.5V584.40H205.5V584.40H207.5V584.40H209.5V584.40H211.5V584.40H213.5V584.40H215.5V584.40H217.5V584.40H219.5V584.40H221.5V584.40H223.5V584.40H225.5V584.40H227.5V584.40H229.5V584.40H231.5V584.40H233.5V584.40H235.5V584.40H237.5V584.40H239.5V584.40H241.5V584.40H243.5V584.40H245.5V584.40H247.5V584.40H249.5V584.40H251.5V584.40H253.5V584.40H255.5V584.40H257.5V584.40H259.5V584.40H261.5V584.40H263.5V584.40H265.5V584.40H267.5V584.40H269.5V584.40H271.5V584.40H273.5V584.40H275.5V584.40H277.5V584.40H279.5V584.40H281.5V584.40H283.5V584.40H285.5V584.40H287.5V584.40H289.5V584.40H291.5V584.40H293.5V584.40H295.5V584.40H297.5V584.40H299.5V584.40H301.5V584.40H303.5V584.40H305.5V584.40H307.5V584.40H309.5V584.40H311.5V584.40H313.5V584.40H315.5V584.40H317.5V584.40H319.5V584.40H321.5V584.40H323.5V584.40H325.5V584.40H327.5V584.40H329.5V584.40H331.5V584.40H333.5V584.40H335.5V584.40H337.5V584.40H339.5V584.40H341.5V584.40H343.5V584.40H345.5V584.40H347.5V584.40H349.5V584.40H351.5V584.40H353.5V584.40H355.5V584.40H357.5V584.40H359.5V584.40H361.5V584.40H363.5V584.40H365.5V584.40H367.5V584.40H369.5V584.40H371.5V584.40H373.5V584.40H375.5V584.40H377.5V584.40H379.5V584.4" stroke="#0000ff" stroke-opacity="0.62" stroke-width="1.35" fill="none"/>
<rect x="292.7" y="506.8" width="13.8" height="10.4" fill="#fff" stroke="#cccccc" stroke-width="1"/>
<rect x="294.3" y="508.4" width="10.6" height="7.2" fill="#0000ff"/>
<text x="310.5" y="516.2" font-family='"Liberation Serif", serif' font-size="13" font-weight="400" fill="#8a8a8a" text-anchor="start" textLength="64" lengthAdjust="spacingAndGlyphs" >aida05 Rate</text>
<path d="M380 489.4L389.6 499L380 508.6L370.4 499Z" fill="#ff0000"/>
<path d="M640 499V584M680 499V584M720 499V584M760 499V584M800 499V584M840 499V584M599.5 520.20H858M599.5 541.50H858M599.5 563.20H858" stroke="#ececec" stroke-width="1.2" fill="none"/>
<text x="595.2" y="502.90" font-family='"Liberation Serif", serif' font-size="12.2" font-weight="400" fill="#5a5a5a" text-anchor="end" textLength="23.6" lengthAdjust="spacingAndGlyphs" >10.0</text>
<text x="595.2" y="524.60" font-family='"Liberation Serif", serif' font-size="12.2" font-weight="400" fill="#5a5a5a" text-anchor="end" textLength="16.6" lengthAdjust="spacingAndGlyphs" >7.5</text>
<text x="595.2" y="545.70" font-family='"Liberation Serif", serif' font-size="12.2" font-weight="400" fill="#5a5a5a" text-anchor="end" textLength="16.6" lengthAdjust="spacingAndGlyphs" >5.0</text>
<text x="595.2" y="566.70" font-family='"Liberation Serif", serif' font-size="12.2" font-weight="400" fill="#5a5a5a" text-anchor="end" textLength="16.6" lengthAdjust="spacingAndGlyphs" >2.5</text>
<text x="595.2" y="588.60" font-family='"Liberation Serif", serif' font-size="12.2" font-weight="400" fill="#5a5a5a" text-anchor="end" textLength="16.6" lengthAdjust="spacingAndGlyphs" >0.0</text>
<text x="600.2" y="598.7" font-family='"Liberation Serif", serif' font-size="12.2" font-weight="400" fill="#5a5a5a" text-anchor="middle" textLength="6.3" lengthAdjust="spacingAndGlyphs" >0</text>
<text x="640.2" y="598.7" font-family='"Liberation Serif", serif' font-size="12.2" font-weight="400" fill="#5a5a5a" text-anchor="middle" textLength="12.6" lengthAdjust="spacingAndGlyphs" >20</text>
<text x="680.2" y="598.7" font-family='"Liberation Serif", serif' font-size="12.2" font-weight="400" fill="#5a5a5a" text-anchor="middle" textLength="12.6" lengthAdjust="spacingAndGlyphs" >40</text>
<text x="720.2" y="598.7" font-family='"Liberation Serif", serif' font-size="12.2" font-weight="400" fill="#5a5a5a" text-anchor="middle" textLength="12.6" lengthAdjust="spacingAndGlyphs" >60</text>
<text x="760.2" y="598.7" font-family='"Liberation Serif", serif' font-size="12.2" font-weight="400" fill="#5a5a5a" text-anchor="middle" textLength="12.6" lengthAdjust="spacingAndGlyphs" >80</text>
<text x="800.2" y="598.7" font-family='"Liberation Serif", serif' font-size="12.2" font-weight="400" fill="#5a5a5a" text-anchor="middle" textLength="19" lengthAdjust="spacingAndGlyphs" >100</text>
<text x="840.2" y="598.7" font-family='"Liberation Serif", serif' font-size="12.2" font-weight="400" fill="#5a5a5a" text-anchor="middle" textLength="19" lengthAdjust="spacingAndGlyphs" >120</text>
<rect x="599" y="498" width="260" height="87" fill="none" stroke="#858585" stroke-width="2"/>
<path d="M599.5 584.4V584.40H601.5V584.40H603.5V584.40H605.5V584.40H607.5V584.40H609.5V584.40H611.5V584.40H613.5V584.40H615.5V584.40H617.5V584.40H619.5V584.40H621.5V584.40H623.5V584.40H625.5V584.40H627.5V584.40H629.5V584.40H631.5V584.40H633.5V584.40H635.5V584.40H637.5V584.40H639.5V584.40H641.5V584.40H643.5V584.40H645.5V584.40H647.5V584.40H649.5V584.40H651.5V584.40H653.5V584.40H655.5V584.40H657.5V584.40H659.5V584.40H661.5V584.40H663.5V584.40H665.5V584.40H667.5V584.40H669.5V584.40H671.5V584.40H673.5V584.40H675.5V584.40H677.5V584.40H679.5V584.40H681.5V584.40H683.5V584.40H685.5V584.40H687.5V584.40H689.5V584.40H691.5V584.40H693.5V584.40H695.5V584.40H697.5V584.40H699.5V584.40H701.5V584.40H703.5V584.40H705.5V584.40H707.5V584.40H709.5V584.40H711.5V584.40H713.5V584.40H715.5V584.40H717.5V584.40H719.5V584.40H721.5V584.40H723.5V584.40H725.5V584.40H727.5V584.40H729.5V584.40H731.5V584.40H733.5V584.40H735.5V584.40H737.5V584.40H739.5V584.40H741.5V584.40H743.5V584.40H745.5V584.40H747.5V584.40H749.5V584.40H751.5V584.40H753.5V584.40H755.5V584.40H757.5V584.40H759.5V584.40H761.5V584.40H763.5V584.40H765.5V584.40H767.5V584.40H769.5V584.40H771.5V584.40H773.5V584.40H775.5V584.40H777.5V584.40H779.5V584.40H781.5V584.40H783.5V584.40H785.5V584.40H787.5V584.40H789.5V584.40H791.5V584.40H793.5V584.40H795.5V584.40H797.5V584.40H799.5V584.40H801.5V584.40H803.5V584.40H805.5V584.40H807.5V584.40H809.5V584.40H811.5V584.40H813.5V584.40H815.5V584.40H817.5V584.40H819.5V584.40H821.5V584.40H823.5V584.40H825.5V584.40H827.5V584.40H829.5V584.40H831.5V584.40H833.5V584.40H835.5V584.40H837.5V584.40H839.5V584.40H841.5V584.40H843.5V584.40H845.5V584.40H847.5V584.40H849.5V584.40H851.5V584.40H853.5V584.40H855.5V584.4" stroke="#0000ff" stroke-opacity="0.62" stroke-width="1.35" fill="none"/>
<rect x="768.7" y="506.8" width="13.8" height="10.4" fill="#fff" stroke="#cccccc" stroke-width="1"/>
<rect x="770.3" y="508.4" width="10.6" height="7.2" fill="#0000ff"/>
<text x="786.5" y="516.2" font-family='"Liberation Serif", serif' font-size="13" font-weight="400" fill="#8a8a8a" text-anchor="start" textLength="64" lengthAdjust="spacingAndGlyphs" >aida06 Rate</text>
<path d="M856 489.4L865.6 499L856 508.6L846.4 499Z" fill="#ff0000"/>
<path d="M1116 499V584M1156 499V584M1196 499V584M1236 499V584M1276 499V584M1316 499V584M1075.5 520.20H1334M1075.5 541.50H1334M1075.5 563.20H1334" stroke="#ececec" stroke-width="1.2" fill="none"/>
<text x="1071.2" y="502.90" font-family='"Liberation Serif", serif' font-size="12.2" font-weight="400" fill="#5a5a5a" text-anchor="end" textLength="23.6" lengthAdjust="spacingAndGlyphs" >10.0</text>
<text x="1071.2" y="524.60" font-family='"Liberation Serif", serif' font-size="12.2" font-weight="400" fill="#5a5a5a" text-anchor="end" textLength="16.6" lengthAdjust="spacingAndGlyphs" >7.5</text>
<text x="1071.2" y="545.70" font-family='"Liberation Serif", serif' font-size="12.2" font-weight="400" fill="#5a5a5a" text-anchor="end" textLength="16.6" lengthAdjust="spacingAndGlyphs" >5.0</text>
<text x="1071.2" y="566.70" font-family='"Liberation Serif", serif' font-size="12.2" font-weight="400" fill="#5a5a5a" text-anchor="end" textLength="16.6" lengthAdjust="spacingAndGlyphs" >2.5</text>
<text x="1071.2" y="588.60" font-family='"Liberation Serif", serif' font-size="12.2" font-weight="400" fill="#5a5a5a" text-anchor="end" textLength="16.6" lengthAdjust="spacingAndGlyphs" >0.0</text>
<text x="1076.2" y="598.7" font-family='"Liberation Serif", serif' font-size="12.2" font-weight="400" fill="#5a5a5a" text-anchor="middle" textLength="6.3" lengthAdjust="spacingAndGlyphs" >0</text>
<text x="1116.2" y="598.7" font-family='"Liberation Serif", serif' font-size="12.2" font-weight="400" fill="#5a5a5a" text-anchor="middle" textLength="12.6" lengthAdjust="spacingAndGlyphs" >20</text>
<text x="1156.2" y="598.7" font-family='"Liberation Serif", serif' font-size="12.2" font-weight="400" fill="#5a5a5a" text-anchor="middle" textLength="12.6" lengthAdjust="spacingAndGlyphs" >40</text>
<text x="1196.2" y="598.7" font-family='"Liberation Serif", serif' font-size="12.2" font-weight="400" fill="#5a5a5a" text-anchor="middle" textLength="12.6" lengthAdjust="spacingAndGlyphs" >60</text>
<text x="1236.2" y="598.7" font-family='"Liberation Serif", serif' font-size="12.2" font-weight="400" fill="#5a5a5a" text-anchor="middle" textLength="12.6" lengthAdjust="spacingAndGlyphs" >80</text>
<text x="1276.2" y="598.7" font-family='"Liberation Serif", serif' font-size="12.2" font-weight="400" fill="#5a5a5a" text-anchor="middle" textLength="19" lengthAdjust="spacingAndGlyphs" >100</text>
<text x="1316.2" y="598.7" font-family='"Liberation Serif", serif' font-size="12.2" font-weight="400" fill="#5a5a5a" text-anchor="middle" textLength="19" lengthAdjust="spacingAndGlyphs" >120</text>
<rect x="1075" y="498" width="260" height="87" fill="none" stroke="#858585" stroke-width="2"/>
<path d="M1075.5 584.4V584.40H1077.5V584.40H1079.5V584.40H1081.5V584.40H1083.5V584.40H1085.5V584.40H1087.5V584.40H1089.5V584.40H1091.5V584.40H1093.5V584.40H1095.5V584.40H1097.5V584.40H1099.5V584.40H1101.5V584.40H1103.5V584.40H1105.5V584.40H1107.5V584.40H1109.5V584.40H1111.5V584.40H1113.5V584.40H1115.5V584.40H1117.5V584.40H1119.5V584.40H1121.5V584.40H1123.5V584.40H1125.5V584.40H1127.5V584.40H1129.5V584.40H1131.5V584.40H1133.5V584.40H1135.5V584.40H1137.5V584.40H1139.5V584.40H1141.5V584.40H1143.5V584.40H1145.5V584.40H1147.5V584.40H1149.5V584.40H1151.5V584.40H1153.5V584.40H1155.5V584.40H1157.5V584.40H1159.5V584.40H1161.5V584.40H1163.5V584.40H1165.5V584.40H1167.5V584.40H1169.5V584.40H1171.5V584.40H1173.5V584.40H1175.5V584.40H1177.5V584.40H1179.5V584.40H1181.5V584.40H1183.5V584.40H1185.5V584.40H1187.5V584.40H1189.5V584.40H1191.5V584.40H1193.5V584.40H1195.5V584.40H1197.5V584.40H1199.5V584.40H1201.5V584.40H1203.5V584.40H1205.5V584.40H1207.5V584.40H1209.5V584.40H1211.5V584.40H1213.5V584.40H1215.5V584.40H1217.5V584.40H1219.5V584.40H1221.5V584.40H1223.5V584.40H1225.5V584.40H1227.5V584.40H1229.5V584.40H1231.5V584.40H1233.5V584.40H1235.5V584.40H1237.5V584.40H1239.5V584.40H1241.5V584.40H1243.5V584.40H1245.5V584.40H1247.5V584.40H1249.5V584.40H1251.5V584.40H1253.5V584.40H1255.5V584.40H1257.5V584.40H1259.5V584.40H1261.5V584.40H1263.5V584.40H1265.5V584.40H1267.5V584.40H1269.5V584.40H1271.5V584.40H1273.5V584.40H1275.5V584.40H1277.5V584.40H1279.5V584.40H1281.5V584.40H1283.5V584.40H1285.5V584.40H1287.5V584.40H1289.5V584.40H1291.5V584.40H1293.5V584.40H1295.5V584.40H1297.5V584.40H1299.5V584.40H1301.5V584.40H1303.5V584.40H1305.5V584.40H1307.5V584.40H1309.5V584.40H1311.5V584.40H1313.5V584.40H1315.5V584.40H1317.5V584.40H1319.5V584.40H1321.5V584.40H1323.5V584.40H1325.5V584.40H1327.5V584.40H1329.5V584.40H1331.5V584.4" stroke="#0000ff" stroke-opacity="0.62" stroke-width="1.35" fill="none"/>
<rect x="1244.7" y="506.8" width="13.8" height="10.4" fill="#fff" stroke="#cccccc" stroke-width="1"/>
<rect x="1246.3" y="508.4" width="10.6" height="7.2" fill="#0000ff"/>
<text x="1262.5" y="516.2" font-family='"Liberation Serif", serif' font-size="13" font-weight="400" fill="#8a8a8a" text-anchor="start" textLength="64" lengthAdjust="spacingAndGlyphs" >aida07 Rate</text>
<path d="M1332 489.4L1341.6 499L1332 508.6L1322.4 499Z" fill="#ff0000"/>
<path d="M1592 499V584M1632 499V584M1672 499V584M1712 499V584M1752 499V584M1792 499V584M1551.5 520.20H1810M1551.5 541.50H1810M1551.5 563.20H1810" stroke="#ececec" stroke-width="1.2" fill="none"/>
<text x="1547.2" y="502.90" font-family='"Liberation Serif", serif' font-size="12.2" font-weight="400" fill="#5a5a5a" text-anchor="end" textLength="23.6" lengthAdjust="spacingAndGlyphs" >10.0</text>
<text x="1547.2" y="524.60" font-family='"Liberation Serif", serif' font-size="12.2" font-weight="400" fill="#5a5a5a" text-anchor="end" textLength="16.6" lengthAdjust="spacingAndGlyphs" >7.5</text>
<text x="1547.2" y="545.70" font-family='"Liberation Serif", serif' font-size="12.2" font-weight="400" fill="#5a5a5a" text-anchor="end" textLength="16.6" lengthAdjust="spacingAndGlyphs" >5.0</text>
<text x="1547.2" y="566.70" font-family='"Liberation Serif", serif' font-size="12.2" font-weight="400" fill="#5a5a5a" text-anchor="end" textLength="16.6" lengthAdjust="spacingAndGlyphs" >2.5</text>
<text x="1547.2" y="588.60" font-family='"Liberation Serif", serif' font-size="12.2" font-weight="400" fill="#5a5a5a" text-anchor="end" textLength="16.6" lengthAdjust="spacingAndGlyphs" >0.0</text>
<text x="1552.2" y="598.7" font-family='"Liberation Serif", serif' font-size="12.2" font-weight="400" fill="#5a5a5a" text-anchor="middle" textLength="6.3" lengthAdjust="spacingAndGlyphs" >0</text>
<text x="1592.2" y="598.7" font-family='"Liberation Serif", serif' font-size="12.2" font-weight="400" fill="#5a5a5a" text-anchor="middle" textLength="12.6" lengthAdjust="spacingAndGlyphs" >20</text>
<text x="1632.2" y="598.7" font-family='"Liberation Serif", serif' font-size="12.2" font-weight="400" fill="#5a5a5a" text-anchor="middle" textLength="12.6" lengthAdjust="spacingAndGlyphs" >40</text>
<text x="1672.2" y="598.7" font-family='"Liberation Serif", serif' font-size="12.2" font-weight="400" fill="#5a5a5a" text-anchor="middle" textLength="12.6" lengthAdjust="spacingAndGlyphs" >60</text>
<text x="1712.2" y="598.7" font-family='"Liberation Serif", serif' font-size="12.2" font-weight="400" fill="#5a5a5a" text-anchor="middle" textLength="12.6" lengthAdjust="spacingAndGlyphs" >80</text>
<text x="1752.2" y="598.7" font-family='"Liberation Serif", serif' font-size="12.2" font-weight="400" fill="#5a5a5a" text-anchor="middle" textLength="19" lengthAdjust="spacingAndGlyphs" >100</text>
<text x="1792.2" y="598.7" font-family='"Liberation Serif", serif' font-size="12.2" font-weight="400" fill="#5a5a5a" text-anchor="middle" textLength="19" lengthAdjust="spacingAndGlyphs" >120</text>
<rect x="1551" y="498" width="260" height="87" fill="none" stroke="#858585" stroke-width="2"/>
<path d="M1551.5 584.4V584.40H1553.5V584.40H1555.5V584.40H1557.5V584.40H1559.5V584.40H1561.5V584.40H1563.5V584.40H1565.5V584.40H1567.5V584.40H1569.5V584.40H1571.5V584.40H1573.5V584.40H1575.5V584.40H1577.5V584.40H1579.5V584.40H1581.5V584.40H1583.5V584.40H1585.5V584.40H1587.5V584.40H1589.5V584.40H1591.5V584.40H1593.5V584.40H1595.5V584.40H1597.5V584.40H1599.5V584.40H1601.5V584.40H1603.5V584.40H1605.5V584.40H1607.5V584.40H1609.5V584.40H1611.5V584.40H1613.5V584.40H1615.5V584.40H1617.5V584.40H1619.5V584.40H1621.5V584.40H1623.5V584.40H1625.5V584.40H1627.5V584.40H1629.5V584.40H1631.5V584.40H1633.5V584.40H1635.5V584.40H1637.5V584.40H1639.5V584.40H1641.5V584.40H1643.5V584.40H1645.5V584.40H1647.5V584.40H1649.5V584.40H1651.5V584.40H1653.5V584.40H1655.5V584.40H1657.5V584.40H1659.5V584.40H1661.5V584.40H1663.5V584.40H1665.5V584.40H1667.5V584.40H1669.5V584.40H1671.5V584.40H1673.5V584.40H1675.5V584.40H1677.5V584.40H1679.5V584.40H1681.5V584.40H1683.5V584.40H1685.5V584.40H1687.5V584.40H1689.5V584.40H1691.5V584.40H1693.5V584.40H1695.5V584.40H1697.5V584.40H1699.5V584.40H1701.5V584.40H1703.5V584.40H1705.5V584.40H1707.5V584.40H1709.5V584.40H1711.5V584.40H1713.5V584.40H1715.5V584.40H1717.5V584.40H1719.5V584.40H1721.5V584.40H1723.5V584.40H1725.5V584.40H1727.5V584.40H1729.5V584.40H1731.5V584.40H1733.5V584.40H1735.5V584.40H1737.5V584.40H1739.5V584.40H1741.5V584.40H1743.5V584.40H1745.5V584.40H1747.5V584.40H1749.5V584.40H1751.5V584.40H1753.5V584.40H1755.5V584.40H1757.5V584.40H1759.5V584.40H1761.5V584.40H1763.5V584.40H1765.5V584.40H1767.5V584.40H1769.5V584.40H1771.5V584.40H1773.5V584.40H1775.5V584.40H1777.5V584.40H1779.5V584.40H1781.5V584.40H1783.5V584.40H1785.5V584.40H1787.5V584.40H1789.5V584.40H1791.5V584.40H1793.5V584.40H1795.5V584.40H1797.5V584.40H1799.5V584.40H1801.5V584.40H1803.5V584.40H1805.5V584.40H1807.5V584.4" stroke="#0000ff" stroke-opacity="0.62" stroke-width="1.35" fill="none"/>
<rect x="1720.7" y="506.8" width="13.8" height="10.4" fill="#fff" stroke="#cccccc" stroke-width="1"/>
<rect x="1722.3" y="508.4" width="10.6" height="7.2" fill="#0000ff"/>
<text x="1738.5" y="516.2" font-family='"Liberation Serif", serif' font-size="13" font-weight="400" fill="#8a8a8a" text-anchor="start" textLength="64" lengthAdjust="spacingAndGlyphs" >aida08 Rate</text>
<path d="M1808 489.4L1817.6 499L1808 508.6L1798.4 499Z" fill="#ff0000"/>
<path d="M164 621V706M204 621V706M244 621V706M284 621V706M324 621V706M364 621V706M123.5 642.20H382M123.5 663.50H382M123.5 685.20H382" stroke="#ececec" stroke-width="1.2" fill="none"/>
<text x="119.2" y="624.90" font-family='"Liberation Serif", serif' font-size="12.2" font-weight="400" fill="#5a5a5a" text-anchor="end" textLength="23.6" lengthAdjust="spacingAndGlyphs" >10.0</text>
<text x="119.2" y="646.60" font-family='"Liberation Serif", serif' font-size="12.2" font-weight="400" fill="#5a5a5a" text-anchor="end" textLength="16.6" lengthAdjust="spacingAndGlyphs" >7.5</text>
<text x="119.2" y="667.70" font-family='"Liberation Serif", serif' font-size="12.2" font-weight="400" fill="#5a5a5a" text-anchor="end" textLength="16.6" lengthAdjust="spacingAndGlyphs" >5.0</text>
<text x="119.2" y="688.70" font-family='"Liberation Serif", serif' font-size="12.2" font-weight="400" fill="#5a5a5a" text-anchor="end" textLength="16.6" lengthAdjust="spacingAndGlyphs" >2.5</text>
<text x="119.2" y="710.60" font-family='"Liberation Serif", serif' font-size="12.2" font-weight="400" fill="#5a5a5a" text-anchor="end" textLength="16.6" lengthAdjust="spacingAndGlyphs" >0.0</text>
<text x="124.2" y="720.7" font-family='"Liberation Serif", serif' font-size="12.2" font-weight="400" fill="#5a5a5a" text-anchor="middle" textLength="6.3" lengthAdjust="spacingAndGlyphs" >0</text>
<text x="164.2" y="720.7" font-family='"Liberation Serif", serif' font-size="12.2" font-weight="400" fill="#5a5a5a" text-anchor="middle" textLength="12.6" lengthAdjust="spacingAndGlyphs" >20</text>
<text x="204.2" y="720.7" font-family='"Liberation Serif", serif' font-size="12.2" font-weight="400" fill="#5a5a5a" text-anchor="middle" textLength="12.6" lengthAdjust="spacingAndGlyphs" >40</text>
<text x="244.2" y="720.7" font-family='"Liberation Serif", serif' font-size="12.2" font-weight="400" fill="#5a5a5a" text-anchor="middle" textLength="12.6" lengthAdjust="spacingAndGlyphs" >60</text>
<text x="284.2" y="720.7" font-family='"Liberation Serif", serif' font-size="12.2" font-weight="400" fill="#5a5a5a" text-anchor="middle" textLength="12.6" lengthAdjust="spacingAndGlyphs" >80</text>
<text x="324.2" y="720.7" font-family='"Liberation Serif", serif' font-size="12.2" font-weight="400" fill="#5a5a5a" text-anchor="middle" textLength="19" lengthAdjust="spacingAndGlyphs" >100</text>
<text x="364.2" y="720.7" font-family='"Liberation Serif", serif' font-size="12.2" font-weight="400" fill="#5a5a5a" text-anchor="middle" textLength="19" lengthAdjust="spacingAndGlyphs" >120</text>
<rect x="123" y="620" width="260" height="87" fill="none" stroke="#858585" stroke-width="2"/>
<path d="M123.5 706.4V706.40H125.5V706.40H127.5V706.40H129.5V706.40H131.5V706.40H133.5V706.40H135.5V706.40H137.5V706.40H139.5V706.40H141.5V706.40H143.5V706.40H145.5V706.40H147.5V706.40H149.5V706.40H151.5V706.40H153.5V706.40H155.5V706.40H157.5V706.40H159.5V706.40H161.5V706.40H163.5V706.40H165.5V706.40H167.5V706.40H169.5V706.40H171.5V706.40H173.5V706.40H175.5V706.40H177.5V706.40H179.5V706.40H181.5V706.40H183.5V706.40H185.5V706.40H187.5V706.40H189.5V706.40H191.5V706.40H193.5V706.40H195.5V706.40H197.5V706.40H199.5V706.40H201.5V706.40H203.5V706.40H205.5V706.40H207.5V706.40H209.5V706.40H211.5V706.40H213.5V706.40H215.5V706.40H217.5V706.40H219.5V706.40H221.5V706.40H223.5V706.40H225.5V706.40H227.5V706.40H229.5V706.40H231.5V706.40H233.5V706.40H235.5V706.40H237.5V706.40H239.5V706.40H241.5V706.40H243.5V706.40H245.5V706.40H247.5V706.40H249.5V706.40H251.5V706.40H253.5V706.40H255.5V706.40H257.5V706.40H259.5V706.40H261.5V706.40H263.5V706.40H265.5V706.40H267.5V706.40H269.5V706.40H271.5V706.40H273.5V706.40H275.5V706.40H277.5V706.40H279.5V706.40H281.5V706.40H283.5V706.40H285.5V706.40H287.5V706.40H289.5V706.40H291.5V706.40H293.5V706.40H295.5V706.40H297.5V706.40H299.5V706.40H301.5V706.40H303.5V706.40H305.5V706.40H307.5V706.40H309.5V706.40H311.5V706.40H313.5V706.40H315.5V706.40H317.5V706.40H319.5V706.40H321.5V706.40H323.5V706.40H325.5V706.40H327.5V706.40H329.5V706.40H331.5V706.40H333.5V706.40H335.5V706.40H337.5V706.40H339.5V706.40H341.5V706.40H343.5V706.40H345.5V706.40H347.5V706.40H349.5V706.40H351.5V706.40H353.5V706.40H355.5V706.40H357.5V706.40H359.5V706.40H361.5V706.40H363.5V706.40H365.5V706.40H367.5V706.40H369.5V706.40H371.5V706.40H373.5V706.40H375.5V706.40H377.5V706.40H379.5V706.4" stroke="#0000ff" stroke-opacity="0.62" stroke-width="1.35" fill="none"/>
<rect x="292.7" y="628.8" width="13.8" height="10.4" fill="#fff" stroke="#cccccc" stroke-width="1"/>
<rect x="294.3" y="630.4" width="10.6" height="7.2" fill="#0000ff"/>
<text x="310.5" y="638.2" font-family='"Liberation Serif", serif' font-size="13" font-weight="400" fill="#8a8a8a" text-anchor="start" textLength="64" lengthAdjust="spacingAndGlyphs" >aida09 Rate</text>
<path d="M380 611.4L389.6 621L380 630.6L370.4 621Z" fill="#ff0000"/>
<path d="M640 621V706M680 621V706M720 621V706M760 621V706M800 621V706M840 621V706M599.5 642.20H858M599.5 663.50H858M599.5 685.20H858" stroke="#ececec" stroke-width="1.2" fill="none"/>
<text x="595.2" y="624.90" font-family='"Liberation Serif", serif' font-size="12.2" font-weight="400" fill="#5a5a5a" text-anchor="end" textLength="23.6" lengthAdjust="spacingAndGlyphs" >10.0</text>
<text x="595.2" y="646.60" font-family='"Liberation Serif", serif' font-size="12.2" font-weight="400" fill="#5a5a5a" text-anchor="end" textLength="16.6" lengthAdjust="spacingAndGlyphs" >7.5</text>
<text x="595.2" y="667.70" font-family='"Liberation Serif", serif' font-size="12.2" font-weight="400" fill="#5a5a5a" text-anchor="end" textLength="16.6" lengthAdjust="spacingAndGlyphs" >5.0</text>
<text x="595.2" y="688.70" font-family='"Liberation Serif", serif' font-size="12.2" font-weight="400" fill="#5a5a5a" text-anchor="end" textLength="16.6" lengthAdjust="spacingAndGlyphs" >2.5</text>
<text x="595.2" y="710.60" font-family='"Liberation Serif", serif' font-size="12.2" font-weight="400" fill="#5a5a5a" text-anchor="end" textLength="16.6" lengthAdjust="spacingAndGlyphs" >0.0</text>
<text x="600.2" y="720.7" font-family='"Liberation Serif", serif' font-size="12.2" font-weight="400" fill="#5a5a5a" text-anchor="middle" textLength="6.3" lengthAdjust="spacingAndGlyphs" >0</text>
<text x="640.2" y="720.7" font-family='"Liberation Serif", serif' font-size="12.2" font-weight="400" fill="#5a5a5a" text-anchor="middle" textLength="12.6" lengthAdjust="spacingAndGlyphs" >20</text>
<text x="680.2" y="720.7" font-family='"Liberation Serif", serif' font-size="12.2" font-weight="400" fill="#5a5a5a" text-anchor="middle" textLength="12.6" lengthAdjust="spacingAndGlyphs" >40</text>
<text x="720.2" y="720.7" font-family='"Liberation Serif", serif' font-size="12.2" font-weight="400" fill="#5a5a5a" text-anchor="middle" textLength="12.6" lengthAdjust="spacingAndGlyphs" >60</text>
<text x="760.2" y="720.7" font-family='"Liberation Serif", serif' font-size="12.2" font-weight="400" fill="#5a5a5a" text-anchor="middle" textLength="12.6" lengthAdjust="spacingAndGlyphs" >80</text>
<text x="800.2" y="720.7" font-family='"Liberation Serif", serif' font-size="12.2" font-weight="400" fill="#5a5a5a" text-anchor="middle" textLength="19" lengthAdjust="spacingAndGlyphs" >100</text>
<text x="840.2" y="720.7" font-family='"Liberation Serif", serif' font-size="12.2" font-weight="400" fill="#5a5a5a" text-anchor="middle" textLength="19" lengthAdjust="spacingAndGlyphs" >120</text>
<rect x="599" y="620" width="260" height="87" fill="none" stroke="#858585" stroke-width="2"/>
<path d="M599.5 706.4V706.40H601.5V706.40H603.5V706.40H605.5V706.40H607.5V706.40H609.5V706.40H611.5V706.40H613.5V706.40H615.5V706.40H617.5V706.40H619.5V706.40H621.5V706.40H623.5V706.40H625.5V706.40H627.5V706.40H629.5V706.40H631.5V706.40H633.5V706.40H635.5V706.40H637.5V706.40H639.5V706.40H641.5V706.40H643.5V706.40H645.5V706.40H647.5V706.40H649.5V706.40H651.5V706.40H653.5V706.40H655.5V706.40H657.5V706.40H659.5V706.40H661.5V706.40H663.5V706.40H665.5V706.40H667.5V706.40H669.5V706.40H671.5V706.40H673.5V706.40H675.5V706.40H677.5V706.40H679.5V706.40H681.5V706.40H683.5V706.40H685.5V706.40H687.5V706.40H689.5V706.40H691.5V706.40H693.5V706.40H695.5V706.40H697.5V706.40H699.5V706.40H701.5V706.40H703.5V706.40H705.5V706.40H707.5V706.40H709.5V706.40H711.5V706.40H713.5V706.40H715.5V706.40H717.5V706.40H719.5V706.40H721.5V706.40H723.5V706.40H725.5V706.40H727.5V706.40H729.5V706.40H731.5V706.40H733.5V706.40H735.5V706.40H737.5V706.40H739.5V706.40H741.5V706.40H743.5V706.40H745.5V706.40H747.5V706.40H749.5V706.40H751.5V706.40H753.5V706.40H755.5V706.40H757.5V706.40H759.5V706.40H761.5V706.40H763.5V706.40H765.5V706.40H767.5V706.40H769.5V706.40H771.5V706.40H773.5V706.40H775.5V706.40H777.5V706.40H779.5V706.40H781.5V706.40H783.5V706.40H785.5V706.40H787.5V706.40H789.5V706.40H791.5V706.40H793.5V706.40H795.5V706.40H797.5V706.40H799.5V706.40H801.5V706.40H803.5V706.40H805.5V706.40H807.5V706.40H809.5V706.40H811.5V706.40H813.5V706.40H815.5V706.40H817.5V706.40H819.5V706.40H821.5V706.40H823.5V706.40H825.5V706.40H827.5V706.40H829.5V706.40H831.5V706.40H833.5V706.40H835.5V706.40H837.5V706.40H839.5V706.40H841.5V706.40H843.5V706.40H845.5V706.40H847.5V706.40H849.5V706.40H851.5V706.40H853.5V706.40H855.5V706.4" stroke="#0000ff" stroke-opacity="0.62" stroke-width="1.35" fill="none"/>
<rect x="768.7" y="628.8" width="13.8" height="10.4" fill="#fff" stroke="#cccccc" stroke-width="1"/>
<rect x="770.3" y="630.4" width="10.6" height="7.2" fill="#0000ff"/>
<text x="786.5" y="638.2" font-family='"Liberation Serif", serif' font-size="13" font-weight="400" fill="#8a8a8a" text-anchor="start" textLength="64" lengthAdjust="spacingAndGlyphs" >aida10 Rate</text>
<path d="M856 611.4L865.6 621L856 630.6L846.4 621Z" fill="#ff0000"/>
<path d="M1116 621V706M1156 621V706M1196 621V706M1236 621V706M1276 621V706M1316 621V706M1075.5 642.20H1334M1075.5 663.50H1334M1075.5 685.20H1334" stroke="#ececec" stroke-width="1.2" fill="none"/>
<text x="1071.2" y="624.90" font-family='"Liberation Serif", serif' font-size="12.2" font-weight="400" fill="#5a5a5a" text-anchor="end" textLength="23.6" lengthAdjust="spacingAndGlyphs" >10.0</text>
<text x="1071.2" y="646.60" font-family='"Liberation Serif", serif' font-size="12.2" font-weight="400" fill="#5a5a5a" text-anchor="end" textLength="16.6" lengthAdjust="spacingAndGlyphs" >7.5</text>
<text x="1071.2" y="667.70" font-family='"Liberation Serif", serif' font-size="12.2" font-weight="400" fill="#5a5a5a" text-anchor="end" textLength="16.6" lengthAdjust="spacingAndGlyphs" >5.0</text>
<text x="1071.2" y="688.70" font-family='"Liberation Serif", serif' font-size="12.2" font-weight="400" fill="#5a5a5a" text-anchor="end" textLength="16.6" lengthAdjust="spacingAndGlyphs" >2.5</text>
<text x="1071.2" y="710.60" font-family='"Liberation Serif", serif' font-size="12.2" font-weight="400" fill="#5a5a5a" text-anchor="end" textLength="16.6" lengthAdjust="spacingAndGlyphs" >0.0</text>
<text x="1076.2" y="720.7" font-family='"Liberation Serif", serif' font-size="12.2" font-weight="400" fill="#5a5a5a" text-anchor="middle" textLength="6.3" lengthAdjust="spacingAndGlyphs" >0</text>
<text x="1116.2" y="720.7" font-family='"Liberation Serif", serif' font-size="12.2" font-weight="400" fill="#5a5a5a" text-anchor="middle" textLength="12.6" lengthAdjust="spacingAndGlyphs" >20</text>
<text x="1156.2" y="720.7" font-family='"Liberation Serif", serif' font-size="12.2" font-weight="400" fill="#5a5a5a" text-anchor="middle" textLength="12.6" lengthAdjust="spacingAndGlyphs" >40</text>
<text x="1196.2" y="720.7" font-family='"Liberation Serif", serif' font-size="12.2" font-weight="400" fill="#5a5a5a" text-anchor="middle" textLength="12.6" lengthAdjust="spacingAndGlyphs" >60</text>
<text x="1236.2" y="720.7" font-family='"Liberation Serif", serif' font-size="12.2" font-weight="400" fill="#5a5a5a" text-anchor="middle" textLength="12.6" lengthAdjust="spacingAndGlyphs" >80</text>
<text x="1276.2" y="720.7" font-family='"Liberation Serif", serif' font-size="12.2" font-weight="400" fill="#5a5a5a" text-anchor="middle" textLength="19" lengthAdjust="spacingAndGlyphs" >100</text>
<text x="1316.2" y="720.7" font-family='"Liberation Serif", serif' font-size="12.2" font-weight="400" fill="#5a5a5a" text-anchor="middle" textLength="19" lengthAdjust="spacingAndGlyphs" >120</text>
<rect x="1075" y="620" width="260" height="87" fill="none" stroke="#858585" stroke-width="2"/>
<path d="M1075.5 706.4V706.40H1077.5V706.40H1079.5V706.40H1081.5V706.40H1083.5V706.40H1085.5V706.40H1087.5V706.40H1089.5V706.40H1091.5V706.40H1093.5V706.40H1095.5V706.40H1097.5V706.40H1099.5V706.40H1101.5V706.40H1103.5V706.40H1105.5V706.40H1107.5V706.40H1109.5V706.40H1111.5V706.40H1113.5V706.40H1115.5V706.40H1117.5V706.40H1119.5V706.40H1121.5V706.40H1123.5V706.40H1125.5V706.40H1127.5V706.40H1129.5V706.40H1131.5V706.40H1133.5V706.40H1135.5V706.40H1137.5V706.40H1139.5V706.40H1141.5V706.40H1143.5V706.40H1145.5V706.40H1147.5V706.40H1149.5V706.40H1151.5V706.40H1153.5V706.40H1155.5V706.40H1157.5V706.40H1159.5V706.40H1161.5V706.40H1163.5V706.40H1165.5V706.40H1167.5V706.40H1169.5V706.40H1171.5V706.40H1173.5V706.40H1175.5V706.40H1177.5V706.40H1179.5V706.40H1181.5V706.40H1183.5V706.40H1185.5V706.40H1187.5V706.40H1189.5V706.40H1191.5V706.40H1193.5V706.40H1195.5V706.40H1197.5V706.40H1199.5V706.40H1201.5V706.40H1203.5V706.40H1205.5V706.40H1207.5V706.40H1209.5V706.40H1211.5V706.40H1213.5V706.40H1215.5V706.40H1217.5V706.40H1219.5V706.40H1221.5V706.40H1223.5V706.40H1225.5V706.40H1227.5V706.40H1229.5V706.40H1231.5V706.40H1233.5V706.40H1235.5V706.40H1237.5V706.40H1239.5V706.40H1241.5V706.40H1243.5V706.40H1245.5V706.40H1247.5V706.40H1249.5V706.40H1251.5V706.40H1253.5V706.40H1255.5V706.40H1257.5V706.40H1259.5V706.40H1261.5V706.40H1263.5V706.40H1265.5V706.40H1267.5V706.40H1269.5V706.40H1271.5V706.40H1273.5V706.40H1275.5V706.40H1277.5V706.40H1279.5V706.40H1281.5V706.40H1283.5V706.40H1285.5V706.40H1287.5V706.40H1289.5V706.40H1291.5V706.40H1293.5V706.40H1295.5V706.40H1297.5V706.40H1299.5V706.40H1301.5V706.40H1303.5V706.40H1305.5V706.40H1307.5V706.40H1309.5V706.40H1311.5V706.40H1313.5V706.40H1315.5V706.40H1317.5V706.40H1319.5V706.40H1321.5V706.40H1323.5V706.40H1325.5V706.40H1327.5V706.40H1329.5V706.40H1331.5V706.4" stroke="#0000ff" stroke-opacity="0.62" stroke-width="1.35" fill="none"/>
<rect x="1244.7" y="628.8" width="13.8" height="10.4" fill="#fff" stroke="#cccccc" stroke-width="1"/>
<rect x="1246.3" y="630.4" width="10.6" height="7.2" fill="#0000ff"/>
<text x="1262.5" y="638.2" font-family='"Liberation Serif", serif' font-size="13" font-weight="400" fill="#8a8a8a" text-anchor="start" textLength="64" lengthAdjust="spacingAndGlyphs" >aida11 Rate</text>
<path d="M1332 611.4L1341.6 621L1332 630.6L1322.4 621Z" fill="#ff0000"/>
<path d="M1592 621V706M1632 621V706M1672 621V706M1712 621V706M1752 621V706M1792 621V706M1551.5 642.20H1810M1551.5 663.50H1810M1551.5 685.20H1810" stroke="#ececec" stroke-width="1.2" fill="none"/>
<text x="1547.2" y="624.90" font-family='"Liberation Serif", serif' font-size="12.2" font-weight="400" fill="#5a5a5a" text-anchor="end" textLength="23.6" lengthAdjust="spacingAndGlyphs" >10.0</text>
<text x="1547.2" y="646.60" font-family='"Liberation Serif", serif' font-size="12.2" font-weight="400" fill="#5a5a5a" text-anchor="end" textLength="16.6" lengthAdjust="spacingAndGlyphs" >7.5</text>
<text x="1547.2" y="667.70" font-family='"Liberation Serif", serif' font-size="12.2" font-weight="400" fill="#5a5a5a" text-anchor="end" textLength="16.6" lengthAdjust="spacingAndGlyphs" >5.0</text>
<text x="1547.2" y="688.70" font-family='"Liberation Serif", serif' font-size="12.2" font-weight="400" fill="#5a5a5a" text-anchor="end" textLength="16.6" lengthAdjust="spacingAndGlyphs" >2.5</text>
<text x="1547.2" y="710.60" font-family='"Liberation Serif", serif' font-size="12.2" font-weight="400" fill="#5a5a5a" text-anchor="end" textLength="16.6" lengthAdjust="spacingAndGlyphs" >0.0</text>
<text x="1552.2" y="720.7" font-family='"Liberation Serif", serif' font-size="12.2" font-weight="400" fill="#5a5a5a" text-anchor="middle" textLength="6.3" lengthAdjust="spacingAndGlyphs" >0</text>
<text x="1592.2" y="720.7" font-family='"Liberation Serif", serif' font-size="12.2" font-weight="400" fill="#5a5a5a" text-anchor="middle" textLength="12.6" lengthAdjust="spacingAndGlyphs" >20</text>
<text x="1632.2" y="720.7" font-family='"Liberation Serif", serif' font-size="12.2" font-weight="400" fill="#5a5a5a" text-anchor="middle" textLength="12.6" lengthAdjust="spacingAndGlyphs" >40</text>
<text x="1672.2" y="720.7" font-family='"Liberation Serif", serif' font-size="12.2" font-weight="400" fill="#5a5a5a" text-anchor="middle" textLength="12.6" lengthAdjust="spacingAndGlyphs" >60</text>
<text x="1712.2" y="720.7" font-family='"Liberation Serif", serif' font-size="12.2" font-weight="400" fill="#5a5a5a" text-anchor="middle" textLength="12.6" lengthAdjust="spacingAndGlyphs" >80</text>
<text x="1752.2" y="720.7" font-family='"Liberation Serif", serif' font-size="12.2" font-weight="400" fill="#5a5a5a" text-anchor="middle" textLength="19" lengthAdjust="spacingAndGlyphs" >100</text>
<text x="1792.2" y="720.7" font-family='"Liberation Serif", serif' font-size="12.2" font-weight="400" fill="#5a5a5a" text-anchor="middle" textLength="19" lengthAdjust="spacingAndGlyphs" >120</text>
<rect x="1551" y="620" width="260" height="87" fill="none" stroke="#858585" stroke-width="2"/>
<path d="M1551.5 706.4V706.40H1553.5V706.40H1555.5V706.40H1557.5V706.40H1559.5V706.40H1561.5V706.40H1563.5V706.40H1565.5V706.40H1567.5V706.40H1569.5V706.40H1571.5V706.40H1573.5V706.40H1575.5V706.40H1577.5V706.40H1579.5V706.40H1581.5V706.40H1583.5V706.40H1585.5V706.40H1587.5V706.40H1589.5V706.40H1591.5V706.40H1593.5V706.40H1595.5V706.40H1597.5V706.40H1599.5V706.40H1601.5V706.40H1603.5V706.40H1605.5V706.40H1607.5V706.40H1609.5V706.40H1611.5V706.40H1613.5V706.40H1615.5V706.40H1617.5V706.40H1619.5V706.40H1621.5V706.40H1623.5V706.40H1625.5V706.40H1627.5V706.40H1629.5V706.40H1631.5V706.40H1633.5V706.40H1635.5V706.40H1637.5V706.40H1639.5V706.40H1641.5V706.40H1643.5V706.40H1645.5V706.40H1647.5V706.40H1649.5V706.40H1651.5V706.40H1653.5V706.40H1655.5V706.40H1657.5V706.40H1659.5V706.40H1661.5V706.40H1663.5V706.40H1665.5V706.40H1667.5V706.40H1669.5V706.40H1671.5V706.40H1673.5V706.40H1675.5V706.40H1677.5V706.40H1679.5V706.40H1681.5V706.40H1683.5V706.40H1685.5V706.40H1687.5V706.40H1689.5V706.40H1691.5V706.40H1693.5V706.40H1695.5V706.40H1697.5V706.40H1699.5V706.40H1701.5V706.40H1703.5V706.40H1705.5V706.40H1707.5V706.40H1709.5V706.40H1711.5V706.40H1713.5V706.40H1715.5V706.40H1717.5V706.40H1719.5V706.40H1721.5V706.40H1723.5V706.40H1725.5V706.40H1727.5V706.40H1729.5V706.40H1731.5V706.40H1733.5V706.40H1735.5V706.40H1737.5V706.40H1739.5V706.40H1741.5V706.40H1743.5V706.40H1745.5V706.40H1747.5V706.40H1749.5V706.40H1751.5V706.40H1753.5V706.40H1755.5V706.40H1757.5V706.40H1759.5V706.40H1761.5V706.40H1763.5V706.40H1765.5V706.40H1767.5V706.40H1769.5V706.40H1771.5V706.40H1773.5V706.40H1775.5V706.40H1777.5V706.40H1779.5V706.40H1781.5V706.40H1783.5V706.40H1785.5V706.40H1787.5V706.40H1789.5V706.40H1791.5V706.40H1793.5V706.40H1795.5V706.40H1797.5V706.40H1799.5V706.40H1801.5V706.40H1803.5V706.40H1805.5V706.40H1807.5V706.4" stroke="#0000ff" stroke-opacity="0.62" stroke-width="1.35" fill="none"/>
<rect x="1720.7" y="628.8" width="13.8" height="10.4" fill="#fff" stroke="#cccccc" stroke-width="1"/>
<rect x="1722.3" y="630.4" width="10.6" height="7.2" fill="#0000ff"/>
<text x="1738.5" y="638.2" font-family='"Liberation Serif", serif' font-size="13" font-weight="400" fill="#8a8a8a" text-anchor="start" textLength="64" lengthAdjust="spacingAndGlyphs" >aida12 Rate</text>
<path d="M1808 611.4L1817.6 621L1808 630.6L1798.4 621Z" fill="#ff0000"/>
<path d="M164 743V828M204 743V828M244 743V828M284 743V828M324 743V828M364 743V828M123.5 764.20H382M123.5 785.50H382M123.5 807.20H382" stroke="#ececec" stroke-width="1.2" fill="none"/>
<text x="119.2" y="746.90" font-family='"Liberation Serif", serif' font-size="12.2" font-weight="400" fill="#5a5a5a" text-anchor="end" textLength="23.6" lengthAdjust="spacingAndGlyphs" >10.0</text>
<text x="119.2" y="768.60" font-family='"Liberation Serif", serif' font-size="12.2" font-weight="400" fill="#5a5a5a" text-anchor="end" textLength="16.6" lengthAdjust="spacingAndGlyphs" >7.5</text>
<text x="119.2" y="789.70" font-family='"Liberation Serif", serif' font-size="12.2" font-weight="400" fill="#5a5a5a" text-anchor="end" textLength="16.6" lengthAdjust="spacingAndGlyphs" >5.0</text>
<text x="119.2" y="810.70" font-family='"Liberation Serif", serif' font-size="12.2" font-weight="400" fill="#5a5a5a" text-anchor="end" textLength="16.6" lengthAdjust="spacingAndGlyphs" >2.5</text>
<text x="119.2" y="832.60" font-family='"Liberation Serif", serif' font-size="12.2" font-weight="400" fill="#5a5a5a" text-anchor="end" textLength="16.6" lengthAdjust="spacingAndGlyphs" >0.0</text>
<text x="124.2" y="842.7" font-family='"Liberation Serif", serif' font-size="12.2" font-weight="400" fill="#5a5a5a" text-anchor="middle" textLength="6.3" lengthAdjust="spacingAndGlyphs" >0</text>
<text x="164.2" y="842.7" font-family='"Liberation Serif", serif' font-size="12.2" font-weight="400" fill="#5a5a5a" text-anchor="middle" textLength="12.6" lengthAdjust="spacingAndGlyphs" >20</text>
<text x="204.2" y="842.7" font-family='"Liberation Serif", serif' font-size="12.2" font-weight="400" fill="#5a5a5a" text-anchor="middle" textLength="12.6" lengthAdjust="spacingAndGlyphs" >40</text>
<text x="244.2" y="842.7" font-family='"Liberation Serif", serif' font-size="12.2" font-weight="400" fill="#5a5a5a" text-anchor="middle" textLength="12.6" lengthAdjust="spacingAndGlyphs" >60</text>
<text x="284.2" y="842.7" font-family='"Liberation Serif", serif' font-size="12.2" font-weight="400" fill="#5a5a5a" text-anchor="middle" textLength="12.6" lengthAdjust="spacingAndGlyphs" >80</text>
<text x="324.2" y="842.7" font-family='"Liberation Serif", serif' font-size="12.2" font-weight="400" fill="#5a5a5a" text-anchor="middle" textLength="19" lengthAdjust="spacingAndGlyphs" >100</text>
<text x="364.2" y="842.7" font-family='"Liberation Serif", serif' font-size="12.2" font-weight="400" fill="#5a5a5a" text-anchor="middle" textLength="19" lengthAdjust="spacingAndGlyphs" >120</text>
<rect x="123" y="742" width="260" height="87" fill="none" stroke="#858585" stroke-width="2"/>
<path d="M123.5 828.4V828.40H125.5V828.40H127.5V828.40H129.5V828.40H131.5V828.40H133.5V828.40H135.5V828.40H137.5V828.40H139.5V828.40H141.5V828.40H143.5V828.40H145.5V828.40H147.5V828.40H149.5V828.40H151.5V828.40H153.5V828.40H155.5V828.40H157.5V828.40H159.5V828.40H161.5V828.40H163.5V828.40H165.5V828.40H167.5V828.40H169.5V828.40H171.5V828.40H173.5V828.40H175.5V828.40H177.5V828.40H179.5V828.40H181.5V828.40H183.5V828.40H185.5V828.40H187.5V828.40H189.5V828.40H191.5V828.40H193.5V828.40H195.5V828.40H197.5V828.40H199.5V828.40H201.5V828.40H203.5V828.40H205.5V828.40H207.5V828.40H209.5V828.40H211.5V828.40H213.5V828.40H215.5V828.40H217.5V828.40H219.5V828.40H221.5V828.40H223.5V828.40H225.5V828.40H227.5V828.40H229.5V828.40H231.5V828.40H233.5V828.40H235.5V828.40H237.5V828.40H239.5V828.40H241.5V828.40H243.5V828.40H245.5V828.40H247.5V828.40H249.5V828.40H251.5V828.40H253.5V828.40H255.5V828.40H257.5V828.40H259.5V828.40H261.5V828.40H263.5V828.40H265.5V828.40H267.5V828.40H269.5V828.40H271.5V828.40H273.5V828.40H275.5V828.40H277.5V828.40H279.5V828.40H281.5V828.40H283.5V828.40H285.5V828.40H287.5V828.40H289.5V828.40H291.5V828.40H293.5V828.40H295.5V828.40H297.5V828.40H299.5V828.40H301.5V828.40H303.5V828.40H305.5V828.40H307.5V828.40H309.5V828.40H311.5V828.40H313.5V828.40H315.5V828.40H317.5V828.40H319.5V828.40H321.5V828.40H323.5V828.40H325.5V828.40H327.5V828.40H329.5V828.40H331.5V828.40H333.5V828.40H335.5V828.40H337.5V828.40H339.5V828.40H341.5V828.40H343.5V828.40H345.5V828.40H347.5V828.40H349.5V828.40H351.5V828.40H353.5V828.40H355.5V828.40H357.5V828.40H359.5V828.40H361.5V828.40H363.5V828.40H365.5V828.40H367.5V828.40H369.5V828.40H371.5V828.40H373.5V828.40H375.5V828.40H377.5V828.40H379.5V828.4" stroke="#0000ff" stroke-opacity="0.62" stroke-width="1.35" fill="none"/>
<rect x="292.7" y="750.8" width="13.8" height="10.4" fill="#fff" stroke="#cccccc" stroke-width="1"/>
<rect x="294.3" y="752.4" width="10.6" height="7.2" fill="#0000ff"/>
<text x="310.5" y="760.2" font-family='"Liberation Serif", serif' font-size="13" font-weight="400" fill="#8a8a8a" text-anchor="start" textLength="64" lengthAdjust="spacingAndGlyphs" >aida13 Rate</text>
<path d="M380 733.4L389.6 743L380 752.6L370.4 743Z" fill="#ff0000"/>
<path d="M640 743V828M680 743V828M720 743V828M760 743V828M800 743V828M840 743V828M599.5 764.20H858M599.5 785.50H858M599.5 807.20H858" stroke="#ececec" stroke-width="1.2" fill="none"/>
<text x="595.2" y="746.90" font-family='"Liberation Serif", serif' font-size="12.2" font-weight="400" fill="#5a5a5a" text-anchor="end" textLength="23.6" lengthAdjust="spacingAndGlyphs" >10.0</text>
<text x="595.2" y="768.60" font-family='"Liberation Serif", serif' font-size="12.2" font-weight="400" fill="#5a5a5a" text-anchor="end" textLength="16.6" lengthAdjust="spacingAndGlyphs" >7.5</text>
<text x="595.2" y="789.70" font-family='"Liberation Serif", serif' font-size="12.2" font-weight="400" fill="#5a5a5a" text-anchor="end" textLength="16.6" lengthAdjust="spacingAndGlyphs" >5.0</text>
<text x="595.2" y="810.70" font-family='"Liberation Serif", serif' font-size="12.2" font-weight="400" fill="#5a5a5a" text-anchor="end" textLength="16.6" lengthAdjust="spacingAndGlyphs" >2.5</text>
<text x="595.2" y="832.60" font-family='"Liberation Serif", serif' font-size="12.2" font-weight="400" fill="#5a5a5a" text-anchor="end" textLength="16.6" lengthAdjust="spacingAndGlyphs" >0.0</text>
<text x="600.2" y="842.7" font-family='"Liberation Serif", serif' font-size="12.2" font-weight="400" fill="#5a5a5a" text-anchor="middle" textLength="6.3" lengthAdjust="spacingAndGlyphs" >0</text>
<text x="640.2" y="842.7" font-family='"Liberation Serif", serif' font-size="12.2" font-weight="400" fill="#5a5a5a" text-anchor="middle" textLength="12.6" lengthAdjust="spacingAndGlyphs" >20</text>
<text x="680.2" y="842.7" font-family='"Liberation Serif", serif' font-size="12.2" font-weight="400" fill="#5a5a5a" text-anchor="middle" textLength="12.6" lengthAdjust="spacingAndGlyphs" >40</text>
<text x="720.2" y="842.7" font-family='"Liberation Serif", serif' font-size="12.2" font-weight="400" fill="#5a5a5a" text-anchor="middle" textLength="12.6" lengthAdjust="spacingAndGlyphs" >60</text>
<text x="760.2" y="842.7" font-family='"Liberation Serif", serif' font-size="12.2" font-weight="400" fill="#5a5a5a" text-anchor="middle" textLength="12.6" lengthAdjust="spacingAndGlyphs" >80</text>
<text x="800.2" y="842.7" font-family='"Liberation Serif", serif' font-size="12.2" font-weight="400" fill="#5a5a5a" text-anchor="middle" textLength="19" lengthAdjust="spacingAndGlyphs" >100</text>
<text x="840.2" y="842.7" font-family='"Liberation Serif", serif' font-size="12.2" font-weight="400" fill="#5a5a5a" text-anchor="middle" textLength="19" lengthAdjust="spacingAndGlyphs" >120</text>
<rect x="599" y="742" width="260" height="87" fill="none" stroke="#858585" stroke-width="2"/>
<path d="M599.5 828.4V828.40H601.5V828.40H603.5V828.40H605.5V828.40H607.5V828.40H609.5V828.40H611.5V828.40H613.5V828.40H615.5V828.40H617.5V828.40H619.5V828.40H621.5V828.40H623.5V828.40H625.5V828.40H627.5V828.40H629.5V828.40H631.5V828.40H633.5V828.40H635.5V828.40H637.5V828.40H639.5V828.40H641.5V828.40H643.5V828.40H645.5V828.40H647.5V828.40H649.5V828.40H651.5V828.40H653.5V828.40H655.5V828.40H657.5V828.40H659.5V828.40H661.5V828.40H663.5V828.40H665.5V828.40H667.5V828.40H669.5V828.40H671.5V828.40H673.5V828.40H675.5V828.40H677.5V828.40H679.5V828.40H681.5V828.40H683.5V828.40H685.5V828.40H687.5V828.40H689.5V828.40H691.5V828.40H693.5V828.40H695.5V828.40H697.5V828.40H699.5V828.40H701.5V828.40H703.5V828.40H705.5V828.40H707.5V828.40H709.5V828.40H711.5V828.40H713.5V828.40H715.5V828.40H717.5V828.40H719.5V828.40H721.5V828.40H723.5V828.40H725.5V828.40H727.5V828.40H729.5V828.40H731.5V828.40H733.5V828.40H735.5V828.40H737.5V828.40H739.5V828.40H741.5V828.40H743.5V828.40H745.5V828.40H747.5V828.40H749.5V828.40H751.5V828.40H753.5V828.40H755.5V828.40H757.5V828.40H759.5V828.40H761.5V828.40H763.5V828.40H765.5V828.40H767.5V828.40H769.5V828.40H771.5V828.40H773.5V828.40H775.5V828.40H777.5V828.40H779.5V828.40H781.5V828.40H783.5V828.40H785.5V828.40H787.5V828.40H789.5V828.40H791.5V828.40H793.5V828.40H795.5V828.40H797.5V828.40H799.5V828.40H801.5V828.40H803.5V828.40H805.5V828.40H807.5V828.40H809.5V828.40H811.5V828.40H813.5V828.40H815.5V828.40H817.5V828.40H819.5V828.40H821.5V828.40H823.5V828.40H825.5V828.40H827.5V828.40H829.5V828.40H831.5V828.40H833.5V828.40H835.5V828.40H837.5V828.40H839.5V828.40H841.5V828.40H843.5V828.40H845.5V828.40H847.5V828.40H849.5V828.40H851.5V828.40H853.5V828.40H855.5V828.4" stroke="#0000ff" stroke-opacity="0.62" stroke-width="1.35" fill="none"/>
<rect x="768.7" y="750.8" width="13.8" height="10.4" fill="#fff" stroke="#cccccc" stroke-width="1"/>
<rect x="770.3" y="752.4" width="10.6" height="7.2" fill="#0000ff"/>
<text x="786.5" y="760.2" font-family='"Liberation Serif", serif' font-size="13" font-weight="400" fill="#8a8a8a" text-anchor="start" textLength="64" lengthAdjust="spacingAndGlyphs" >aida14 Rate</text>
<path d="M856 733.4L865.6 743L856 752.6L846.4 743Z" fill="#ff0000"/>
<path d="M1116 743V828M1156 743V828M1196 743V828M1236 743V828M1276 743V828M1316 743V828M1075.5 764.20H1334M1075.5 785.50H1334M1075.5 807.20H1334" stroke="#ececec" stroke-width="1.2" fill="none"/>
<text x="1071.2" y="746.90" font-family='"Liberation Serif", serif' font-size="12.2" font-weight="400" fill="#5a5a5a" text-anchor="end" textLength="23.6" lengthAdjust="spacingAndGlyphs" >10.0</text>
<text x="1071.2" y="768.60" font-family='"Liberation Serif", serif' font-size="12.2" font-weight="400" fill="#5a5a5a" text-anchor="end" textLength="16.6" lengthAdjust="spacingAndGlyphs" >7.5</text>
<text x="1071.2" y="789.70" font-family='"Liberation Serif", serif' font-size="12.2" font-weight="400" fill="#5a5a5a" text-anchor="end" textLength="16.6" lengthAdjust="spacingAndGlyphs" >5.0</text>
<text x="1071.2" y="810.70" font-family='"Liberation Serif", serif' font-size="12.2" font-weight="400" fill="#5a5a5a" text-anchor="end" textLength="16.6" lengthAdjust="spacingAndGlyphs" >2.5</text>
<text x="1071.2" y="832.60" font-family='"Liberation Serif", serif' font-size="12.2" font-weight="400" fill="#5a5a5a" text-anchor="end" textLength="16.6" lengthAdjust="spacingAndGlyphs" >0.0</text>
<text x="1076.2" y="842.7" font-family='"Liberation Serif", serif' font-size="12.2" font-weight="400" fill="#5a5a5a" text-anchor="middle" textLength="6.3" lengthAdjust="spacingAndGlyphs" >0</text>
<text x="1116.2" y="842.7" font-family='"Liberation Serif", serif' font-size="12.2" font-weight="400" fill="#5a5a5a" text-anchor="middle" textLength="12.6" lengthAdjust="spacingAndGlyphs" >20</text>
<text x="1156.2" y="842.7" font-family='"Liberation Serif", serif' font-size="12.2" font-weight="400" fill="#5a5a5a" text-anchor="middle" textLength="12.6" lengthAdjust="spacingAndGlyphs" >40</text>
<text x="1196.2" y="842.7" font-family='"Liberation Serif", serif' font-size="12.2" font-weight="400" fill="#5a5a5a" text-anchor="middle" textLength="12.6" lengthAdjust="spacingAndGlyphs" >60</text>
<text x="1236.2" y="842.7" font-family='"Liberation Serif", serif' font-size="12.2" font-weight="400" fill="#5a5a5a" text-anchor="middle" textLength="12.6" lengthAdjust="spacingAndGlyphs" >80</text>
<text x="1276.2" y="842.7" font-family='"Liberation Serif", serif' font-size="12.2" font-weight="400" fill="#5a5a5a" text-anchor="middle" textLength="19" lengthAdjust="spacingAndGlyphs" >100</text>
<text x="1316.2" y="842.7" font-family='"Liberation Serif", serif' font-size="12.2" font-weight="400" fill="#5a5a5a" text-anchor="middle" textLength="19" lengthAdjust="spacingAndGlyphs" >120</text>
<rect x="1075" y="742" width="260" height="87" fill="none" stroke="#858585" stroke-width="2"/>
<rect x="1277.5" y="751.41" width="2" height="76.98" fill="#0000ff" fill-opacity="0.3"/>
<rect x="1291.5" y="752.89" width="2" height="75.51" fill="#0000ff" fill-opacity="0.3"/>
<path d="M1075.5 828.4V828.40H1077.5V828.40H1079.5V828.40H1081.5V828.40H1083.5V828.40H1085.5V828.40H1087.5V828.40H1089.5V828.40H1091.5V828.40H1093.5V828.40H1095.5V828.40H1097.5V828.40H1099.5V828.40H1101.5V828.40H1103.5V828.40H1105.5V828.40H1107.5V828.40H1109.5V828.40H1111.5V828.40H1113.5V828.40H1115.5V828.40H1117.5V828.40H1119.5V828.40H1121.5V828.40H1123.5V828.40H1125.5V828.40H1127.5V828.40H1129.5V828.40H1131.5V828.40H1133.5V828.40H1135.5V828.40H1137.5V828.40H1139.5V828.40H1141.5V828.40H1143.5V828.40H1145.5V828.40H1147.5V828.40H1149.5V828.40H1151.5V828.40H1153.5V828.40H1155.5V828.40H1157.5V828.40H1159.5V828.40H1161.5V828.40H1163.5V828.40H1165.5V828.40H1167.5V828.40H1169.5V828.40H1171.5V828.40H1173.5V828.40H1175.5V828.40H1177.5V828.40H1179.5V828.40H1181.5V828.40H1183.5V828.40H1185.5V828.40H1187.5V828.40H1189.5V828.40H1191.5V828.40H1193.5V828.40H1195.5V828.40H1197.5V828.40H1199.5V828.40H1201.5V828.40H1203.5V828.40H1205.5V828.40H1207.5V828.40H1209.5V828.40H1211.5V828.40H1213.5V828.40H1215.5V828.40H1217.5V828.40H1219.5V828.40H1221.5V828.40H1223.5V828.40H1225.5V828.40H1227.5V828.40H1229.5V828.40H1231.5V828.40H1233.5V828.40H1235.5V828.40H1237.5V828.40H1239.5V828.40H1241.5V828.40H1243.5V828.40H1245.5V828.40H1247.5V828.40H1249.5V828.40H1251.5V828.40H1253.5V828.40H1255.5V828.40H1257.5V828.40H1259.5V828.40H1261.5V828.40H1263.5V828.40H1265.5V828.40H1267.5V828.40H1269.5V828.40H1271.5V828.40H1273.5V828.40H1275.5V828.40H1277.5V751.41H1279.5V828.40H1281.5V828.40H1283.5V828.40H1285.5V828.40H1287.5V828.40H1289.5V828.40H1291.5V752.89H1293.5V828.40H1295.5V828.40H1297.5V828.40H1299.5V828.40H1301.5V828.40H1303.5V828.40H1305.5V828.40H1307.5V828.40H1309.5V828.40H1311.5V828.40H1313.5V828.40H1315.5V828.40H1317.5V828.40H1319.5V828.40H1321.5V828.40H1323.5V828.40H1325.5V828.40H1327.5V828.40H1329.5V828.40H1331.5V828.4" stroke="#0000ff" stroke-opacity="0.62" stroke-width="1.35" fill="none"/>
<rect x="1244.7" y="750.8" width="13.8" height="10.4" fill="#fff" stroke="#cccccc" stroke-width="1"/>
<rect x="1246.3" y="752.4" width="10.6" height="7.2" fill="#0000ff"/>
<text x="1262.5" y="760.2" font-family='"Liberation Serif", serif' font-size="13" font-weight="400" fill="#8a8a8a" text-anchor="start" textLength="64" lengthAdjust="spacingAndGlyphs" >aida15 Rate</text>
<path d="M1332 733.4L1341.6 743L1332 752.6L1322.4 743Z" fill="#ff0000"/>
<path d="M1592 743V828M1632 743V828M1672 743V828M1712 743V828M1752 743V828M1792 743V828M1551.5 764.20H1810M1551.5 785.50H1810M1551.5 807.20H1810" stroke="#ececec" stroke-width="1.2" fill="none"/>
<text x="1547.2" y="746.90" font-family='"Liberation Serif", serif' font-size="12.2" font-weight="400" fill="#5a5a5a" text-anchor="end" textLength="23.6" lengthAdjust="spacingAndGlyphs" >10.0</text>
<text x="1547.2" y="768.60" font-family='"Liberation Serif", serif' font-size="12.2" font-weight="400" fill="#5a5a5a" text-anchor="end" textLength="16.6" lengthAdjust="spacingAndGlyphs" >7.5</text>
<text x="1547.2" y="789.70" font-family='"Liberation Serif", serif' font-size="12.2" font-weight="400" fill="#5a5a5a" text-anchor="end" textLength="16.6" lengthAdjust="spacingAndGlyphs" >5.0</text>
<text x="1547.2" y="810.70" font-family='"Liberation Serif", serif' font-size="12.2" font-weight="400" fill="#5a5a5a" text-anchor="end" textLength="16.6" lengthAdjust="spacingAndGlyphs" >2.5</text>
<text x="1547.2" y="832.60" font-family='"Liberation Serif", serif' font-size="12.2" font-weight="400" fill="#5a5a5a" text-anchor="end" textLength="16.6" lengthAdjust="spacingAndGlyphs" >0.0</text>
<text x="1552.2" y="842.7" font-family='"Liberation Serif", serif' font-size="12.2" font-weight="400" fill="#5a5a5a" text-anchor="middle" textLength="6.3" lengthAdjust="spacingAndGlyphs" >0</text>
<text x="1592.2" y="842.7" font-family='"Liberation Serif", serif' font-size="12.2" font-weight="400" fill="#5a5a5a" text-anchor="middle" textLength="12.6" lengthAdjust="spacingAndGlyphs" >20</text>
<text x="1632.2" y="842.7" font-family='"Liberation Serif", serif' font-size="12.2" font-weight="400" fill="#5a5a5a" text-anchor="middle" textLength="12.6" lengthAdjust="spacingAndGlyphs" >40</text>
<text x="1672.2" y="842.7" font-family='"Liberation Serif", serif' font-size="12.2" font-weight="400" fill="#5a5a5a" text-anchor="middle" textLength="12.6" lengthAdjust="spacingAndGlyphs" >60</text>
<text x="1712.2" y="842.7" font-family='"Liberation Serif", serif' font-size="12.2" font-weight="400" fill="#5a5a5a" text-anchor="middle" textLength="12.6" lengthAdjust="spacingAndGlyphs" >80</text>
<text x="1752.2" y="842.7" font-family='"Liberation Serif", serif' font-size="12.2" font-weight="400" fill="#5a5a5a" text-anchor="middle" textLength="19" lengthAdjust="spacingAndGlyphs" >100</text>
<text x="1792.2" y="842.7" font-family='"Liberation Serif", serif' font-size="12.2" font-weight="400" fill="#5a5a5a" text-anchor="middle" textLength="19" lengthAdjust="spacingAndGlyphs" >120</text>
<rect x="1551" y="742" width="260" height="87" fill="none" stroke="#858585" stroke-width="2"/>
<path d="M1551.5 828.4V828.40H1553.5V828.40H1555.5V828.40H1557.5V828.40H1559.5V828.40H1561.5V828.40H1563.5V828.40H1565.5V828.40H1567.5V828.40H1569.5V828.40H1571.5V828.40H1573.5V828.40H1575.5V828.40H1577.5V828.40H1579.5V828.40H1581.5V828.40H1583.5V828.40H1585.5V828.40H1587.5V828.40H1589.5V828.40H1591.5V828.40H1593.5V828.40H1595.5V828.40H1597.5V828.40H1599.5V828.40H1601.5V828.40H1603.5V828.40H1605.5V828.40H1607.5V828.40H1609.5V828.40H1611.5V828.40H1613.5V828.40H1615.5V828.40H1617.5V828.40H1619.5V828.40H1621.5V828.40H1623.5V828.40H1625.5V828.40H1627.5V828.40H1629.5V828.40H1631.5V828.40H1633.5V828.40H1635.5V828.40H1637.5V828.40H1639.5V828.40H1641.5V828.40H1643.5V828.40H1645.5V828.40H1647.5V828.40H1649.5V828.40H1651.5V828.40H1653.5V828.40H1655.5V828.40H1657.5V828.40H1659.5V828.40H1661.5V828.40H1663.5V828.40H1665.5V828.40H1667.5V828.40H1669.5V828.40H1671.5V828.40H1673.5V828.40H1675.5V828.40H1677.5V828.40H1679.5V828.40H1681.5V828.40H1683.5V828.40H1685.5V828.40H1687.5V828.40H1689.5V828.40H1691.5V828.40H1693.5V828.40H1695.5V828.40H1697.5V828.40H1699.5V828.40H1701.5V828.40H1703.5V828.40H1705.5V828.40H1707.5V828.40H1709.5V828.40H1711.5V828.40H1713.5V828.40H1715.5V828.40H1717.5V828.40H1719.5V828.40H1721.5V828.40H1723.5V828.40H1725.5V828.40H1727.5V828.40H1729.5V828.40H1731.5V828.40H1733.5V828.40H1735.5V828.40H1737.5V828.40H1739.5V828.40H1741.5V828.40H1743.5V828.40H1745.5V828.40H1747.5V828.40H1749.5V828.40H1751.5V828.40H1753.5V828.40H1755.5V828.40H1757.5V828.40H1759.5V828.40H1761.5V828.40H1763.5V828.40H1765.5V828.40H1767.5V828.40H1769.5V828.40H1771.5V828.40H1773.5V828.40H1775.5V828.40H1777.5V828.40H1779.5V828.40H1781.5V828.40H1783.5V828.40H1785.5V828.40H1787.5V828.40H1789.5V828.40H1791.5V828.40H1793.5V828.40H1795.5V828.40H1797.5V828.40H1799.5V828.40H1801.5V828.40H1803.5V828.40H1805.5V828.40H1807.5V828.4" stroke="#0000ff" stroke-opacity="0.62" stroke-width="1.35" fill="none"/>
<rect x="1720.7" y="750.8" width="13.8" height="10.4" fill="#fff" stroke="#cccccc" stroke-width="1"/>
<rect x="1722.3" y="752.4" width="10.6" height="7.2" fill="#0000ff"/>
<text x="1738.5" y="760.2" font-family='"Liberation Serif", serif' font-size="13" font-weight="400" fill="#8a8a8a" text-anchor="start" textLength="64" lengthAdjust="spacingAndGlyphs" >aida16 Rate</text>
<path d="M1808 733.4L1817.6 743L1808 752.6L1798.4 743Z" fill="#ff0000"/>
<rect x="6" y="359" width="1" height="490" fill="#ff0000"/><rect x="7" y="359" width="1" height="490" fill="#b00000"/>
<rect x="483" y="359" width="1" height="490" fill="#ff0000"/><rect x="484" y="359" width="1" height="490" fill="#b00000"/>
<rect x="959" y="359" width="1" height="490" fill="#ff0000"/><rect x="960" y="359" width="1" height="490" fill="#b00000"/>
<rect x="1435" y="359" width="1" height="490" fill="#ff0000"/><rect x="1436" y="359" width="1" height="490" fill="#b00000"/>
<rect x="1912" y="359" width="1" height="490" fill="#ff0000"/><rect x="1913" y="359" width="1" height="490" fill="#b00000"/>
<rect x="6" y="359" width="1908" height="1" fill="#ff0000"/><rect x="6" y="360" width="1908" height="1" fill="#b00000"/>
<rect x="6" y="481" width="1908" height="1" fill="#ff0000"/><rect x="6" y="482" width="1908" height="1" fill="#b00000"/>
<rect x="6" y="603" width="1908" height="1" fill="#ff0000"/><rect x="6" y="604" width="1908" height="1" fill="#b00000"/>
<rect x="6" y="725" width="1908" height="1" fill="#ff0000"/><rect x="6" y="726" width="1908" height="1" fill="#b00000"/>
<rect x="6" y="847" width="1908" height="1" fill="#ff0000"/><rect x="6" y="848" width="1908" height="1" fill="#b00000"/>
</svg>
</body></html>
